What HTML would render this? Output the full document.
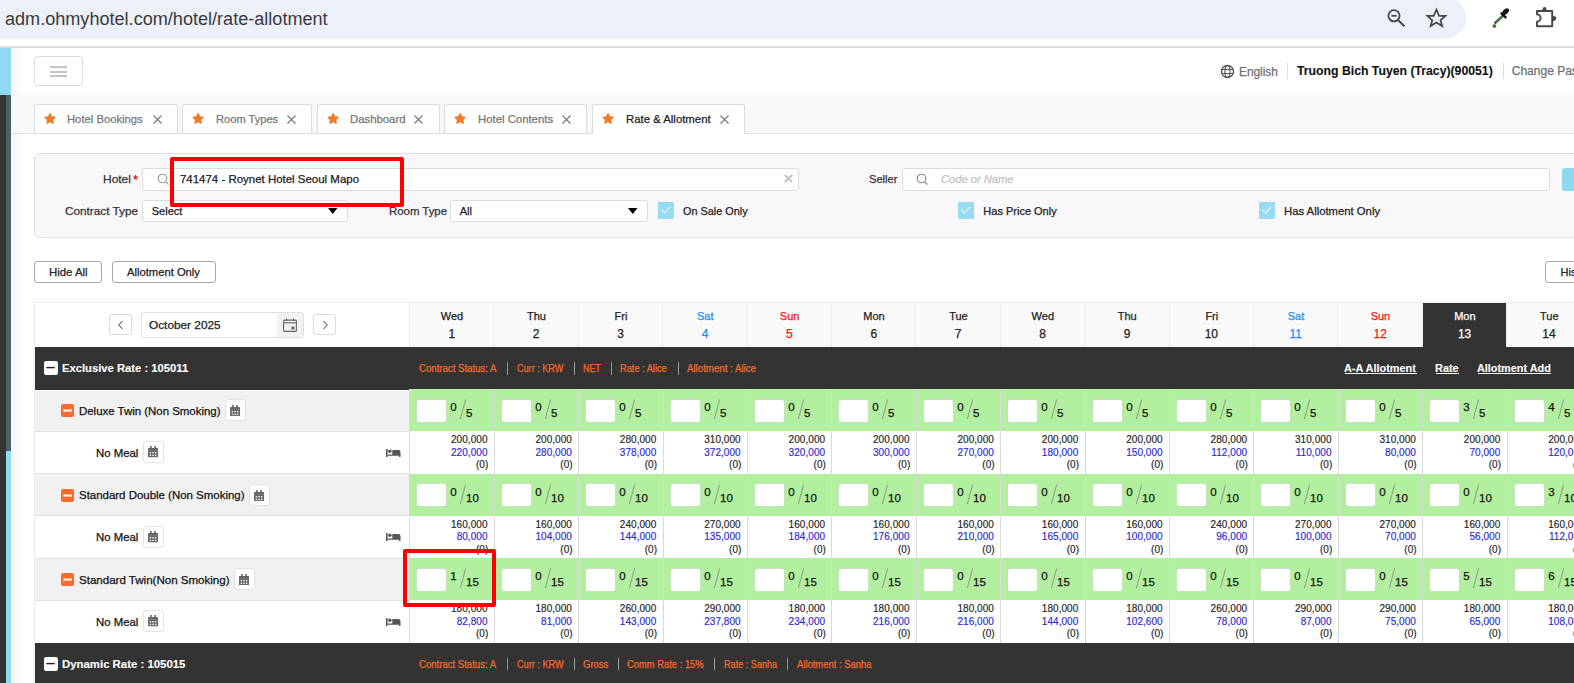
<!DOCTYPE html><html><head><meta charset="utf-8"><style>
*{box-sizing:border-box;margin:0;padding:0}
html,body{width:1574px;height:683px;overflow:hidden;background:#fff;font-family:"Liberation Sans",sans-serif;color:#222}
.a{position:absolute}
.a svg{display:block}
.t{position:absolute;white-space:nowrap;line-height:1;transform-origin:0 0;-webkit-text-stroke:0.25px currentColor}
</style></head><body>
<div class="a" style="left:-30px;top:-3px;width:1496px;height:41.6px;background:#ecf0f8;border-radius:21px"></div>
<div class="t" style="left:4.92px;top:10.00px;font-size:18px;color:#3a3a3a;font-weight:normal;font-style:normal;transform:scaleX(1.0045);-webkit-text-stroke:0">adm.ohmyhotel.com/hotel/rate-allotment</div>
<div class="a" style="left:0px;top:46px;width:1574px;height:2px;background:#dcdedc"></div>
<svg class="a" style="left:1380px;top:0" width="194" height="40" viewBox="1380 0 194 40">
<circle cx="1394" cy="15.8" r="5.6" fill="none" stroke="#474747" stroke-width="1.8"/>
<line x1="1391.4" y1="15.8" x2="1396.6" y2="15.8" stroke="#474747" stroke-width="1.8"/>
<line x1="1398" y1="20" x2="1404.4" y2="26.2" stroke="#474747" stroke-width="1.9"/>
<polygon points="1436.4,9.6 1439.1,15.9 1445.4,15.9 1440.5,20.3 1442.2,26.1 1436.4,22.6 1430.6,26.1 1432.3,20.3 1427.4,15.9 1433.7,15.9" fill="none" stroke="#474747" stroke-width="1.7" stroke-linejoin="miter"/>
<line x1="1495.4" y1="22.6" x2="1503.6" y2="15.3" stroke="#444" stroke-width="2.6" stroke-linecap="round"/>
<line x1="1495.8" y1="22.2" x2="1503" y2="15.8" stroke="#3aa04a" stroke-width="1.1"/>
<line x1="1501.4" y1="13.3" x2="1505.6" y2="17.4" stroke="#111" stroke-width="2.3" stroke-linecap="round"/>
<ellipse cx="1505.7" cy="11.6" rx="3.9" ry="2.5" transform="rotate(-45 1505.7 11.6)" fill="#151515"/>
<circle cx="1494.4" cy="26" r="1.5" fill="#2e8a3c" stroke="#333" stroke-width="0.6"/>
<path d="M1537,11 H1552.2 V26.2 H1537 V21.6 A3.6,3.6 0 0 0 1537,14.4 Z" fill="none" stroke="#474747" stroke-width="1.9" stroke-linejoin="round"/>
<path d="M1542.1,11 Q1542.6,7 1544.5,7 Q1546.4,7 1546.9,11 Z" fill="#474747"/>
<path d="M1552.2,15.6 Q1556.2,16.2 1556.2,18.5 Q1556.2,20.8 1552.2,21.4 Z" fill="#474747"/>
</svg>
<div class="a" style="left:0px;top:48px;width:11px;height:47px;background:#8fd9f1"></div>
<div class="a" style="left:0px;top:95px;width:6px;height:588px;background:#333"></div>
<div class="a" style="left:6px;top:95px;width:5px;height:356px;background:#4b5f66"></div>
<div class="a" style="left:6px;top:451px;width:5px;height:232px;background:#8fd9f1"></div>
<div class="a" style="left:11px;top:48px;width:1px;height:635px;background:#fff"></div>
<div class="a" style="left:12px;top:48px;width:12px;height:635px;background:linear-gradient(to right,#f4f3f7,#fff)"></div>
<div class="a" style="left:34px;top:56px;width:49px;height:30px;border:1px solid #dcdcdc;border-radius:4px;background:#fff"></div>
<div class="a" style="left:50px;top:66px;width:17px;height:2px;background:#c4c4c4"></div>
<div class="a" style="left:50px;top:70.5px;width:17px;height:2px;background:#c4c4c4"></div>
<div class="a" style="left:50px;top:75px;width:17px;height:2px;background:#c4c4c4"></div>
<div class="a" style="left:1220px;top:64px;width:15px;height:15px"><svg width="15" height="15" viewBox="0 0 15 15"><circle cx="7.5" cy="7.5" r="6" fill="none" stroke="#555" stroke-width="1.3"/><ellipse cx="7.5" cy="7.5" rx="2.6" ry="6" fill="none" stroke="#555" stroke-width="1.1"/><line x1="1.5" y1="5.5" x2="13.5" y2="5.5" stroke="#555" stroke-width="1"/><line x1="1.5" y1="9.5" x2="13.5" y2="9.5" stroke="#555" stroke-width="1"/></svg></div>
<div class="t" style="left:1238.89px;top:66.00px;font-size:12px;color:#707070;font-weight:normal;font-style:normal;transform:scaleX(0.9852);">English</div>
<div class="a" style="left:1287px;top:63px;width:1px;height:16px;background:#ddd"></div>
<div class="t" style="left:1297.27px;top:65.00px;font-size:12px;color:#111;font-weight:bold;font-style:normal;-webkit-text-stroke:0.1px currentColor;transform:scaleX(1.0204);">Truong Bich Tuyen (Tracy)(90051)</div>
<div class="a" style="left:1503px;top:63px;width:1px;height:16px;background:#ddd"></div>
<div class="t" style="left:1511.78px;top:65.00px;font-size:12px;color:#707070;font-weight:normal;font-style:normal;">Change Password</div>
<div class="a" style="left:11px;top:95px;width:1563px;height:38px;background:#f8f7fa"></div>
<div class="a" style="left:11px;top:133px;width:1563px;height:1px;background:#dedede"></div>
<div class="a" style="left:34px;top:104px;width:144px;height:29px;background:#fff;border:1px solid #dcdcdc;border-bottom:none;border-radius:3px 3px 0 0"></div>
<div class="a" style="left:43.7px;top:113.4px;width:12.2px;height:10.9px"><svg width="12.2" height="10.9" viewBox="0 0 576 512"><path d="M259.3 17.8L194 150.2 47.9 171.5c-26.2 3.8-36.7 36.1-17.7 54.6l105.7 103-25 145.5c-4.5 26.3 23.2 46 46.4 33.7L288 439.6l130.7 68.7c23.2 12.2 50.9-7.4 46.4-33.7l-25-145.5 105.7-103c19-18.5 8.5-50.8-17.7-54.6L382 150.2 316.7 17.8c-11.7-23.6-45.6-23.9-57.4 0z" fill="#f07b28"/></svg></div>
<div class="t" style="left:67.43px;top:114.00px;font-size:11px;color:#777;font-weight:normal;font-style:normal;transform:scaleX(1.0227);">Hotel Bookings</div>
<div class="a" style="left:152.5px;top:114.5px;width:9px;height:9px"><svg width="9" height="9" viewBox="0 0 9 9"><path d="M0.5 0.5L8.5 8.5M8.5 0.5L0.5 8.5" stroke="#777" stroke-width="1.1"/></svg></div>
<div class="a" style="left:182px;top:104px;width:130px;height:29px;background:#fff;border:1px solid #dcdcdc;border-bottom:none;border-radius:3px 3px 0 0"></div>
<div class="a" style="left:191.7px;top:113.4px;width:12.2px;height:10.9px"><svg width="12.2" height="10.9" viewBox="0 0 576 512"><path d="M259.3 17.8L194 150.2 47.9 171.5c-26.2 3.8-36.7 36.1-17.7 54.6l105.7 103-25 145.5c-4.5 26.3 23.2 46 46.4 33.7L288 439.6l130.7 68.7c23.2 12.2 50.9-7.4 46.4-33.7l-25-145.5 105.7-103c19-18.5 8.5-50.8-17.7-54.6L382 150.2 316.7 17.8c-11.7-23.6-45.6-23.9-57.4 0z" fill="#f07b28"/></svg></div>
<div class="t" style="left:215.53px;top:114.00px;font-size:11px;color:#777;font-weight:normal;font-style:normal;transform:scaleX(1.0100);">Room Types</div>
<div class="a" style="left:287.1px;top:114.5px;width:9px;height:9px"><svg width="9" height="9" viewBox="0 0 9 9"><path d="M0.5 0.5L8.5 8.5M8.5 0.5L0.5 8.5" stroke="#777" stroke-width="1.1"/></svg></div>
<div class="a" style="left:317px;top:104px;width:123px;height:29px;background:#fff;border:1px solid #dcdcdc;border-bottom:none;border-radius:3px 3px 0 0"></div>
<div class="a" style="left:326.7px;top:113.4px;width:12.2px;height:10.9px"><svg width="12.2" height="10.9" viewBox="0 0 576 512"><path d="M259.3 17.8L194 150.2 47.9 171.5c-26.2 3.8-36.7 36.1-17.7 54.6l105.7 103-25 145.5c-4.5 26.3 23.2 46 46.4 33.7L288 439.6l130.7 68.7c23.2 12.2 50.9-7.4 46.4-33.7l-25-145.5 105.7-103c19-18.5 8.5-50.8-17.7-54.6L382 150.2 316.7 17.8c-11.7-23.6-45.6-23.9-57.4 0z" fill="#f07b28"/></svg></div>
<div class="t" style="left:350.12px;top:114.00px;font-size:11px;color:#777;font-weight:normal;font-style:normal;transform:scaleX(1.0314);">Dashboard</div>
<div class="a" style="left:414.3px;top:114.5px;width:9px;height:9px"><svg width="9" height="9" viewBox="0 0 9 9"><path d="M0.5 0.5L8.5 8.5M8.5 0.5L0.5 8.5" stroke="#777" stroke-width="1.1"/></svg></div>
<div class="a" style="left:444px;top:104px;width:143px;height:29px;background:#fff;border:1px solid #dcdcdc;border-bottom:none;border-radius:3px 3px 0 0"></div>
<div class="a" style="left:453.7px;top:113.4px;width:12.2px;height:10.9px"><svg width="12.2" height="10.9" viewBox="0 0 576 512"><path d="M259.3 17.8L194 150.2 47.9 171.5c-26.2 3.8-36.7 36.1-17.7 54.6l105.7 103-25 145.5c-4.5 26.3 23.2 46 46.4 33.7L288 439.6l130.7 68.7c23.2 12.2 50.9-7.4 46.4-33.7l-25-145.5 105.7-103c19-18.5 8.5-50.8-17.7-54.6L382 150.2 316.7 17.8c-11.7-23.6-45.6-23.9-57.4 0z" fill="#f07b28"/></svg></div>
<div class="t" style="left:477.72px;top:114.00px;font-size:11px;color:#777;font-weight:normal;font-style:normal;transform:scaleX(1.0316);">Hotel Contents</div>
<div class="a" style="left:562.0px;top:114.5px;width:9px;height:9px"><svg width="9" height="9" viewBox="0 0 9 9"><path d="M0.5 0.5L8.5 8.5M8.5 0.5L0.5 8.5" stroke="#777" stroke-width="1.1"/></svg></div>
<div class="a" style="left:592px;top:104px;width:153px;height:30px;background:#fff;border:1px solid #dcdcdc;border-bottom:none;border-radius:3px 3px 0 0"></div>
<div class="a" style="left:601.7px;top:113.4px;width:12.2px;height:10.9px"><svg width="12.2" height="10.9" viewBox="0 0 576 512"><path d="M259.3 17.8L194 150.2 47.9 171.5c-26.2 3.8-36.7 36.1-17.7 54.6l105.7 103-25 145.5c-4.5 26.3 23.2 46 46.4 33.7L288 439.6l130.7 68.7c23.2 12.2 50.9-7.4 46.4-33.7l-25-145.5 105.7-103c19-18.5 8.5-50.8-17.7-54.6L382 150.2 316.7 17.8c-11.7-23.6-45.6-23.9-57.4 0z" fill="#f07b28"/></svg></div>
<div class="t" style="left:625.52px;top:114.00px;font-size:11px;color:#222;font-weight:normal;font-style:normal;transform:scaleX(1.0327);">Rate &amp; Allotment</div>
<div class="a" style="left:719.9px;top:114.5px;width:9px;height:9px"><svg width="9" height="9" viewBox="0 0 9 9"><path d="M0.5 0.5L8.5 8.5M8.5 0.5L0.5 8.5" stroke="#777" stroke-width="1.1"/></svg></div>
<div class="a" style="left:34px;top:153px;width:1560px;height:85px;background:#f9f7fa;border:1px solid #dfdfdf;border-radius:6px"></div>
<div class="t" style="left:102.98px;top:174.00px;font-size:11px;color:#333;font-weight:normal;font-style:normal;transform:scaleX(1.0865);">Hotel</div>
<div class="t" style="left:133.28px;top:174.00px;font-size:12px;color:#e00;font-weight:normal;font-style:normal;">*</div>
<div class="a" style="left:142px;top:168px;width:657px;height:23px;background:#fff;border:1px solid #dcdcdc;border-radius:3px"></div>
<div class="a" style="left:157px;top:173px;width:13px;height:13px"><svg width="13" height="13" viewBox="0 0 13 13"><circle cx="5.5" cy="5.5" r="4.3" fill="none" stroke="#999" stroke-width="1.1"/><line x1="8.6" y1="8.6" x2="11.5" y2="11.5" stroke="#999" stroke-width="1.1"/></svg></div>
<div class="t" style="left:180.11px;top:174.00px;font-size:10.5px;color:#222;font-weight:normal;font-style:normal;transform:scaleX(1.0914);">741474 - Roynet Hotel Seoul Mapo</div>
<div class="a" style="left:784px;top:174.2px;width:9px;height:9px"><svg width="9" height="9" viewBox="0 0 9 9"><path d="M0.8 0.8L8.2 8.2M8.2 0.8L0.8 8.2" stroke="#bdbdbd" stroke-width="1.8"/></svg></div>
<div class="t" style="left:869.34px;top:174.00px;font-size:11px;color:#333;font-weight:normal;font-style:normal;transform:scaleX(1.0072);">Seller</div>
<div class="a" style="left:902px;top:168px;width:648px;height:23px;background:#fff;border:1px solid #dcdcdc;border-radius:3px"></div>
<div class="a" style="left:916px;top:173px;width:13px;height:13px"><svg width="13" height="13" viewBox="0 0 13 13"><circle cx="5.5" cy="5.5" r="4.3" fill="none" stroke="#888" stroke-width="1.1"/><line x1="8.6" y1="8.6" x2="11.5" y2="11.5" stroke="#888" stroke-width="1.1"/></svg></div>
<div class="t" style="left:940.63px;top:174.00px;font-size:10.5px;color:#c2c2c2;font-weight:normal;font-style:italic;transform:scaleX(1.0618);">Code or Name</div>
<div class="a" style="left:1562px;top:168px;width:40px;height:23px;background:#8ed8f0;border-radius:3px"></div>
<div class="t" style="left:65.49px;top:206.00px;font-size:11px;color:#333;font-weight:normal;font-style:normal;transform:scaleX(1.0694);">Contract Type</div>
<div class="a" style="left:142px;top:200px;width:206px;height:22px;background:#fff;border:1px solid #dcdcdc;border-radius:3px"></div>
<div class="t" style="left:151.74px;top:206.00px;font-size:11px;color:#222;font-weight:normal;font-style:normal;">Select</div>
<div class="a" style="left:328px;top:208px;width:9.5px;height:6px"><svg width="9.5" height="6" viewBox="0 0 9.5 6"><path d="M0 0H9.5L4.75 6Z" fill="#000"/></svg></div>
<div class="t" style="left:388.92px;top:206.00px;font-size:11px;color:#333;font-weight:normal;font-style:normal;transform:scaleX(1.0348);">Room Type</div>
<div class="a" style="left:450px;top:200px;width:198px;height:22px;background:#fff;border:1px solid #dcdcdc;border-radius:3px"></div>
<div class="t" style="left:459.74px;top:206.00px;font-size:11px;color:#222;font-weight:normal;font-style:normal;">All</div>
<div class="a" style="left:628px;top:208px;width:9.5px;height:6px"><svg width="9.5" height="6" viewBox="0 0 9.5 6"><path d="M0 0H9.5L4.75 6Z" fill="#000"/></svg></div>
<div class="a" style="left:658px;top:202.3px;width:16px;height:17px"><svg width="16" height="17" viewBox="0 0 16 17"><rect width="16" height="17" fill="#97dbf1"/><path d="M3.2 7.3L6.6 10.9L12 4.8" fill="none" stroke="#e8f8fd" stroke-width="1.1"/></svg></div>
<div class="t" style="left:683.35px;top:206.00px;font-size:11px;color:#222;font-weight:normal;font-style:normal;transform:scaleX(0.9868);">On Sale Only</div>
<div class="a" style="left:958px;top:202.3px;width:16px;height:17px"><svg width="16" height="17" viewBox="0 0 16 17"><rect width="16" height="17" fill="#97dbf1"/><path d="M3.2 7.3L6.6 10.9L12 4.8" fill="none" stroke="#e8f8fd" stroke-width="1.1"/></svg></div>
<div class="t" style="left:983.34px;top:206.00px;font-size:11px;color:#222;font-weight:normal;font-style:normal;">Has Price Only</div>
<div class="a" style="left:1259px;top:202.3px;width:16px;height:17px"><svg width="16" height="17" viewBox="0 0 16 17"><rect width="16" height="17" fill="#97dbf1"/><path d="M3.2 7.3L6.6 10.9L12 4.8" fill="none" stroke="#e8f8fd" stroke-width="1.1"/></svg></div>
<div class="t" style="left:1284.32px;top:206.00px;font-size:11px;color:#222;font-weight:normal;font-style:normal;transform:scaleX(1.0268);">Has Allotment Only</div>
<div class="a" style="left:170px;top:157px;width:234px;height:50px;border:4px solid #f00;border-radius:2px"></div>
<div class="a" style="left:34px;top:261px;width:68px;height:22px;background:#fff;border:1px solid #a8a8a8;border-radius:3px"></div>
<div class="t" style="left:48.62px;top:267.00px;font-size:11px;color:#222;font-weight:normal;font-style:normal;transform:scaleX(1.0326);">Hide All</div>
<div class="a" style="left:112px;top:261px;width:104px;height:22px;background:#fff;border:1px solid #a8a8a8;border-radius:3px"></div>
<div class="t" style="left:126.53px;top:267.00px;font-size:11px;color:#222;font-weight:normal;font-style:normal;transform:scaleX(1.0201);">Allotment Only</div>
<div class="a" style="left:1545px;top:261px;width:60px;height:22px;background:#fff;border:1px solid #a8a8a8;border-radius:3px"></div>
<div class="t" style="left:1560.54px;top:267.00px;font-size:11px;color:#222;font-weight:normal;font-style:normal;">History</div>
<div class="a" style="left:34px;top:302px;width:1540px;height:1px;background:#ececec"></div>
<div class="a" style="left:34px;top:302px;width:1px;height:381px;background:#ececec"></div>
<div class="a" style="left:35px;top:303px;width:374px;height:44px;background:#fff"></div>
<div class="a" style="left:109px;top:314px;width:23px;height:21px;border:1px solid #dcdcdc;border-radius:3px;background:#fff"></div>
<div class="a" style="left:117px;top:320px;width:8px;height:10px"><svg width="8" height="10" viewBox="0 0 8 10"><path d="M5.5 1L1.8 5L5.5 9" fill="none" stroke="#666" stroke-width="1.1"/></svg></div>
<div class="a" style="left:141px;top:312px;width:163px;height:26px;border:1px solid #e0e0e0;border-radius:3px;background:#fff"></div>
<div class="a" style="left:277px;top:313px;width:26px;height:24px;background:#f2f2f2"></div>
<div class="a" style="left:283px;top:318px;width:14px;height:14px"><svg width="14" height="14" viewBox="0 0 14 14"><rect x="0.6" y="2.1" width="12.8" height="11.3" rx="1" fill="none" stroke="#666" stroke-width="1.1"/><line x1="0.6" y1="4.8" x2="13.4" y2="4.8" stroke="#666" stroke-width="1.1"/><line x1="3.5" y1="0.5" x2="3.5" y2="3" stroke="#666" stroke-width="1.1"/><line x1="10.5" y1="0.5" x2="10.5" y2="3" stroke="#666" stroke-width="1.1"/><rect x="8.5" y="8.5" width="3" height="3" fill="#666"/></svg></div>
<div class="t" style="left:149.09px;top:320.00px;font-size:11px;color:#222;font-weight:normal;font-style:normal;transform:scaleX(1.0747);">October 2025</div>
<div class="a" style="left:313px;top:314px;width:23px;height:21px;border:1px solid #dcdcdc;border-radius:3px;background:#fff"></div>
<div class="a" style="left:321px;top:320px;width:8px;height:10px"><svg width="8" height="10" viewBox="0 0 8 10"><path d="M2.5 1L6.2 5L2.5 9" fill="none" stroke="#666" stroke-width="1.1"/></svg></div>
<div class="a" style="left:409px;top:303px;width:84px;height:44px;background:#f9f9f9;border-left:1px solid #ececec"></div>
<div class="t" style="left:440.82px;top:311.00px;font-size:11px;color:#222;font-weight:normal;font-style:normal;">Wed</div>
<div class="t" style="left:448.44px;top:328.00px;font-size:12px;color:#222;font-weight:normal;font-style:normal;">1</div>
<div class="a" style="left:493px;top:303px;width:85px;height:44px;background:#f9f9f9;border-left:1px solid #ececec"></div>
<div class="t" style="left:526.95px;top:311.00px;font-size:11px;color:#222;font-weight:normal;font-style:normal;">Thu</div>
<div class="t" style="left:532.84px;top:328.00px;font-size:12px;color:#222;font-weight:normal;font-style:normal;">2</div>
<div class="a" style="left:578px;top:303px;width:84px;height:44px;background:#f9f9f9;border-left:1px solid #ececec"></div>
<div class="t" style="left:614.58px;top:311.00px;font-size:11px;color:#222;font-weight:normal;font-style:normal;">Fri</div>
<div class="t" style="left:617.24px;top:328.00px;font-size:12px;color:#222;font-weight:normal;font-style:normal;">3</div>
<div class="a" style="left:662px;top:303px;width:85px;height:44px;background:#f9f9f9;border-left:1px solid #ececec"></div>
<div class="t" style="left:696.94px;top:311.00px;font-size:11px;color:#1f8cf5;font-weight:normal;font-style:normal;">Sat</div>
<div class="t" style="left:701.64px;top:328.00px;font-size:12px;color:#1f8cf5;font-weight:normal;font-style:normal;">4</div>
<div class="a" style="left:747px;top:303px;width:84px;height:44px;background:#f9f9f9;border-left:1px solid #ececec"></div>
<div class="t" style="left:779.84px;top:311.00px;font-size:11px;color:#ff1414;font-weight:normal;font-style:normal;">Sun</div>
<div class="t" style="left:786.04px;top:328.00px;font-size:12px;color:#ff1414;font-weight:normal;font-style:normal;">5</div>
<div class="a" style="left:831px;top:303px;width:84px;height:44px;background:#f9f9f9;border-left:1px solid #ececec"></div>
<div class="t" style="left:863.33px;top:311.00px;font-size:11px;color:#222;font-weight:normal;font-style:normal;">Mon</div>
<div class="t" style="left:870.44px;top:328.00px;font-size:12px;color:#222;font-weight:normal;font-style:normal;">6</div>
<div class="a" style="left:915px;top:303px;width:85px;height:44px;background:#f9f9f9;border-left:1px solid #ececec"></div>
<div class="t" style="left:949.16px;top:311.00px;font-size:11px;color:#222;font-weight:normal;font-style:normal;">Tue</div>
<div class="t" style="left:954.84px;top:328.00px;font-size:12px;color:#222;font-weight:normal;font-style:normal;">7</div>
<div class="a" style="left:1000px;top:303px;width:84px;height:44px;background:#f9f9f9;border-left:1px solid #ececec"></div>
<div class="t" style="left:1031.62px;top:311.00px;font-size:11px;color:#222;font-weight:normal;font-style:normal;">Wed</div>
<div class="t" style="left:1039.24px;top:328.00px;font-size:12px;color:#222;font-weight:normal;font-style:normal;">8</div>
<div class="a" style="left:1084px;top:303px;width:85px;height:44px;background:#f9f9f9;border-left:1px solid #ececec"></div>
<div class="t" style="left:1117.75px;top:311.00px;font-size:11px;color:#222;font-weight:normal;font-style:normal;">Thu</div>
<div class="t" style="left:1123.64px;top:328.00px;font-size:12px;color:#222;font-weight:normal;font-style:normal;">9</div>
<div class="a" style="left:1169px;top:303px;width:84px;height:44px;background:#f9f9f9;border-left:1px solid #ececec"></div>
<div class="t" style="left:1205.38px;top:311.00px;font-size:11px;color:#222;font-weight:normal;font-style:normal;">Fri</div>
<div class="t" style="left:1204.70px;top:328.00px;font-size:12px;color:#222;font-weight:normal;font-style:normal;">10</div>
<div class="a" style="left:1253px;top:303px;width:84px;height:44px;background:#f9f9f9;border-left:1px solid #ececec"></div>
<div class="t" style="left:1287.74px;top:311.00px;font-size:11px;color:#1f8cf5;font-weight:normal;font-style:normal;">Sat</div>
<div class="t" style="left:1289.55px;top:328.00px;font-size:12px;color:#1f8cf5;font-weight:normal;font-style:normal;">11</div>
<div class="a" style="left:1337px;top:303px;width:85px;height:44px;background:#f9f9f9;border-left:1px solid #ececec"></div>
<div class="t" style="left:1370.64px;top:311.00px;font-size:11px;color:#ff1414;font-weight:normal;font-style:normal;">Sun</div>
<div class="t" style="left:1373.50px;top:328.00px;font-size:12px;color:#ff1414;font-weight:normal;font-style:normal;">12</div>
<div class="a" style="left:1422px;top:303px;width:84px;height:44px;background:#333;border-left:1px solid #ececec"></div>
<div class="a" style="left:1423px;top:303px;width:84px;height:44px;background:#333"></div>
<div class="t" style="left:1454.13px;top:311.00px;font-size:11px;color:#fff;font-weight:normal;font-style:normal;">Mon</div>
<div class="t" style="left:1457.90px;top:328.00px;font-size:12px;color:#fff;font-weight:normal;font-style:normal;">13</div>
<div class="a" style="left:1506px;top:303px;width:85px;height:44px;background:#f9f9f9;border-left:1px solid #ececec"></div>
<div class="t" style="left:1539.96px;top:311.00px;font-size:11px;color:#222;font-weight:normal;font-style:normal;">Tue</div>
<div class="t" style="left:1542.30px;top:328.00px;font-size:12px;color:#222;font-weight:normal;font-style:normal;">14</div>
<div class="a" style="left:1591px;top:303px;width:84px;height:44px;background:#f9f9f9;border-left:1px solid #ececec"></div>
<div class="t" style="left:1622.42px;top:311.00px;font-size:11px;color:#222;font-weight:normal;font-style:normal;">Wed</div>
<div class="t" style="left:1626.70px;top:328.00px;font-size:12px;color:#222;font-weight:normal;font-style:normal;">15</div>
<div class="a" style="left:35px;top:347px;width:1539px;height:42.5px;background:#333"></div>
<div class="a" style="left:44px;top:361px;width:14px;height:14px"><svg width="14" height="14" viewBox="0 0 14 14"><rect width="14" height="14" rx="2" fill="#fff"/><rect x="2.4" y="5.9" width="8.4" height="1.4" fill="#222"/></svg></div>
<div class="t" style="left:61.93px;top:363.00px;font-size:11px;color:#fff;font-weight:bold;font-style:normal;-webkit-text-stroke:0.1px currentColor;transform:scaleX(1.0216);">Exclusive Rate : 105011</div>
<div class="t" style="left:419.02px;top:364.00px;font-size:10px;color:#f26b2b;font-weight:normal;font-style:normal;transform:scaleX(0.9619);">Contract Status: A</div>
<div class="t" style="left:516.96px;top:364.00px;font-size:10px;color:#f26b2b;font-weight:normal;font-style:normal;transform:scaleX(0.9079);">Curr : KRW</div>
<div class="t" style="left:582.87px;top:364.00px;font-size:10px;color:#f26b2b;font-weight:normal;font-style:normal;transform:scaleX(0.8864);">NET</div>
<div class="t" style="left:620.35px;top:364.00px;font-size:10px;color:#f26b2b;font-weight:normal;font-style:normal;transform:scaleX(0.9240);">Rate : Alice</div>
<div class="t" style="left:687.32px;top:364.00px;font-size:10px;color:#f26b2b;font-weight:normal;font-style:normal;transform:scaleX(0.9688);">Allotment : Alice</div>
<div class="a" style="left:507px;top:362px;width:1px;height:12.5px;background:#9a9a9a"></div>
<div class="a" style="left:574px;top:362px;width:1px;height:12.5px;background:#9a9a9a"></div>
<div class="a" style="left:611px;top:362px;width:1px;height:12.5px;background:#9a9a9a"></div>
<div class="a" style="left:678px;top:362px;width:1px;height:12.5px;background:#9a9a9a"></div>
<div class="t" style="left:1344.25px;top:363.00px;font-size:11px;color:#fff;font-weight:bold;font-style:normal;-webkit-text-stroke:0.1px currentColor;transform:scaleX(0.9904);">A-A Allotment</div>
<div class="a" style="left:1344.9px;top:373px;width:72.3px;height:1px;background:#fff"></div>
<div class="t" style="left:1435.34px;top:363.00px;font-size:11px;color:#fff;font-weight:bold;font-style:normal;-webkit-text-stroke:0.1px currentColor;transform:scaleX(0.9929);">Rate</div>
<div class="a" style="left:1436px;top:373px;width:22.9px;height:1px;background:#fff"></div>
<div class="t" style="left:1477.25px;top:363.00px;font-size:11px;color:#fff;font-weight:bold;font-style:normal;-webkit-text-stroke:0.1px currentColor;transform:scaleX(0.9867);">Allotment Add</div>
<div class="a" style="left:1477.9px;top:373px;width:72.8px;height:1px;background:#fff"></div>
<div class="a" style="left:35px;top:389px;width:374px;height:42.55px;background:#f1f1f1"></div>
<div class="a" style="left:61px;top:404px;width:13px;height:13px"><svg width="13" height="13" viewBox="0 0 13 13"><rect width="13" height="13" rx="2" fill="#ff6a2b"/><rect x="2.4" y="5.5" width="8.4" height="2.1" fill="#fff"/></svg></div>
<div class="t" style="left:78.61px;top:406.00px;font-size:11px;color:#111;font-weight:normal;font-style:normal;transform:scaleX(1.0392);">Deluxe Twin (Non Smoking)</div>
<div class="a" style="left:225px;top:399px;width:21px;height:22px;background:#fff;border:1px solid #e3e3e3;border-radius:3px"></div>
<div class="a" style="left:230.2px;top:404.5px;width:10px;height:11.5px"><svg width="10" height="11.5" viewBox="0 0 10 11.5"><rect x="2.1" y="0" width="1.6" height="3" fill="#666"/><rect x="6.3" y="0" width="1.6" height="3" fill="#666"/><rect x="0" y="2.1" width="10" height="9.2" rx="0.8" fill="#666"/><rect x="0" y="4.3" width="10" height="0.5" fill="#888"/><g fill="#fff"><rect x="1.7" y="6" width="1.4" height="1.4"/><rect x="4.3" y="6" width="1.4" height="1.4"/><rect x="6.9" y="6" width="1.4" height="1.4"/><rect x="1.7" y="8.7" width="1.4" height="1.4"/><rect x="4.3" y="8.7" width="1.4" height="1.4"/><rect x="6.9" y="8.7" width="1.4" height="1.4"/></g></svg></div>
<div class="a" style="left:409px;top:389px;width:85px;height:42.55px;background:#b2f09f;border-left:1px solid #dadada"></div>
<div class="a" style="left:416.5px;top:399.5px;width:29px;height:22px;background:#fff;border-radius:2.5px;box-shadow:0 0 0 0.5px #d9d4d9"></div>
<div class="t" style="left:450.21px;top:402.00px;font-size:11.5px;color:#111;font-weight:normal;font-style:normal;">0</div>
<div class="a" style="left:460px;top:399px;width:7px;height:21px"><svg width="7" height="21" viewBox="0 0 7 21"><line x1="5.6" y1="0.5" x2="0.4" y2="20" stroke="#8a8a8a" stroke-width="0.9"/></svg></div>
<div class="t" style="left:466.11px;top:408.00px;font-size:11.5px;color:#111;font-weight:normal;font-style:normal;">5</div>
<div class="a" style="left:494px;top:389px;width:84px;height:42.55px;background:#b2f09f;border-left:1px solid #dadada"></div>
<div class="a" style="left:501.5px;top:399.5px;width:29px;height:22px;background:#fff;border-radius:2.5px;box-shadow:0 0 0 0.5px #d9d4d9"></div>
<div class="t" style="left:535.21px;top:402.00px;font-size:11.5px;color:#111;font-weight:normal;font-style:normal;">0</div>
<div class="a" style="left:545px;top:399px;width:7px;height:21px"><svg width="7" height="21" viewBox="0 0 7 21"><line x1="5.6" y1="0.5" x2="0.4" y2="20" stroke="#8a8a8a" stroke-width="0.9"/></svg></div>
<div class="t" style="left:551.11px;top:408.00px;font-size:11.5px;color:#111;font-weight:normal;font-style:normal;">5</div>
<div class="a" style="left:578px;top:389px;width:85px;height:42.55px;background:#b2f09f;border-left:1px solid #dadada"></div>
<div class="a" style="left:585.5px;top:399.5px;width:29px;height:22px;background:#fff;border-radius:2.5px;box-shadow:0 0 0 0.5px #d9d4d9"></div>
<div class="t" style="left:619.21px;top:402.00px;font-size:11.5px;color:#111;font-weight:normal;font-style:normal;">0</div>
<div class="a" style="left:629px;top:399px;width:7px;height:21px"><svg width="7" height="21" viewBox="0 0 7 21"><line x1="5.6" y1="0.5" x2="0.4" y2="20" stroke="#8a8a8a" stroke-width="0.9"/></svg></div>
<div class="t" style="left:635.11px;top:408.00px;font-size:11.5px;color:#111;font-weight:normal;font-style:normal;">5</div>
<div class="a" style="left:663px;top:389px;width:84px;height:42.55px;background:#b2f09f;border-left:1px solid #dadada"></div>
<div class="a" style="left:670.5px;top:399.5px;width:29px;height:22px;background:#fff;border-radius:2.5px;box-shadow:0 0 0 0.5px #d9d4d9"></div>
<div class="t" style="left:704.21px;top:402.00px;font-size:11.5px;color:#111;font-weight:normal;font-style:normal;">0</div>
<div class="a" style="left:714px;top:399px;width:7px;height:21px"><svg width="7" height="21" viewBox="0 0 7 21"><line x1="5.6" y1="0.5" x2="0.4" y2="20" stroke="#8a8a8a" stroke-width="0.9"/></svg></div>
<div class="t" style="left:720.11px;top:408.00px;font-size:11.5px;color:#111;font-weight:normal;font-style:normal;">5</div>
<div class="a" style="left:747px;top:389px;width:84px;height:42.55px;background:#b2f09f;border-left:1px solid #dadada"></div>
<div class="a" style="left:754.5px;top:399.5px;width:29px;height:22px;background:#fff;border-radius:2.5px;box-shadow:0 0 0 0.5px #d9d4d9"></div>
<div class="t" style="left:788.21px;top:402.00px;font-size:11.5px;color:#111;font-weight:normal;font-style:normal;">0</div>
<div class="a" style="left:798px;top:399px;width:7px;height:21px"><svg width="7" height="21" viewBox="0 0 7 21"><line x1="5.6" y1="0.5" x2="0.4" y2="20" stroke="#8a8a8a" stroke-width="0.9"/></svg></div>
<div class="t" style="left:804.11px;top:408.00px;font-size:11.5px;color:#111;font-weight:normal;font-style:normal;">5</div>
<div class="a" style="left:831px;top:389px;width:85px;height:42.55px;background:#b2f09f;border-left:1px solid #dadada"></div>
<div class="a" style="left:838.5px;top:399.5px;width:29px;height:22px;background:#fff;border-radius:2.5px;box-shadow:0 0 0 0.5px #d9d4d9"></div>
<div class="t" style="left:872.21px;top:402.00px;font-size:11.5px;color:#111;font-weight:normal;font-style:normal;">0</div>
<div class="a" style="left:882px;top:399px;width:7px;height:21px"><svg width="7" height="21" viewBox="0 0 7 21"><line x1="5.6" y1="0.5" x2="0.4" y2="20" stroke="#8a8a8a" stroke-width="0.9"/></svg></div>
<div class="t" style="left:888.11px;top:408.00px;font-size:11.5px;color:#111;font-weight:normal;font-style:normal;">5</div>
<div class="a" style="left:916px;top:389px;width:84px;height:42.55px;background:#b2f09f;border-left:1px solid #dadada"></div>
<div class="a" style="left:923.5px;top:399.5px;width:29px;height:22px;background:#fff;border-radius:2.5px;box-shadow:0 0 0 0.5px #d9d4d9"></div>
<div class="t" style="left:957.21px;top:402.00px;font-size:11.5px;color:#111;font-weight:normal;font-style:normal;">0</div>
<div class="a" style="left:967px;top:399px;width:7px;height:21px"><svg width="7" height="21" viewBox="0 0 7 21"><line x1="5.6" y1="0.5" x2="0.4" y2="20" stroke="#8a8a8a" stroke-width="0.9"/></svg></div>
<div class="t" style="left:973.11px;top:408.00px;font-size:11.5px;color:#111;font-weight:normal;font-style:normal;">5</div>
<div class="a" style="left:1000px;top:389px;width:85px;height:42.55px;background:#b2f09f;border-left:1px solid #dadada"></div>
<div class="a" style="left:1007.5px;top:399.5px;width:29px;height:22px;background:#fff;border-radius:2.5px;box-shadow:0 0 0 0.5px #d9d4d9"></div>
<div class="t" style="left:1041.21px;top:402.00px;font-size:11.5px;color:#111;font-weight:normal;font-style:normal;">0</div>
<div class="a" style="left:1051px;top:399px;width:7px;height:21px"><svg width="7" height="21" viewBox="0 0 7 21"><line x1="5.6" y1="0.5" x2="0.4" y2="20" stroke="#8a8a8a" stroke-width="0.9"/></svg></div>
<div class="t" style="left:1057.11px;top:408.00px;font-size:11.5px;color:#111;font-weight:normal;font-style:normal;">5</div>
<div class="a" style="left:1085px;top:389px;width:84px;height:42.55px;background:#b2f09f;border-left:1px solid #dadada"></div>
<div class="a" style="left:1092.5px;top:399.5px;width:29px;height:22px;background:#fff;border-radius:2.5px;box-shadow:0 0 0 0.5px #d9d4d9"></div>
<div class="t" style="left:1126.21px;top:402.00px;font-size:11.5px;color:#111;font-weight:normal;font-style:normal;">0</div>
<div class="a" style="left:1136px;top:399px;width:7px;height:21px"><svg width="7" height="21" viewBox="0 0 7 21"><line x1="5.6" y1="0.5" x2="0.4" y2="20" stroke="#8a8a8a" stroke-width="0.9"/></svg></div>
<div class="t" style="left:1142.11px;top:408.00px;font-size:11.5px;color:#111;font-weight:normal;font-style:normal;">5</div>
<div class="a" style="left:1169px;top:389px;width:84px;height:42.55px;background:#b2f09f;border-left:1px solid #dadada"></div>
<div class="a" style="left:1176.5px;top:399.5px;width:29px;height:22px;background:#fff;border-radius:2.5px;box-shadow:0 0 0 0.5px #d9d4d9"></div>
<div class="t" style="left:1210.21px;top:402.00px;font-size:11.5px;color:#111;font-weight:normal;font-style:normal;">0</div>
<div class="a" style="left:1220px;top:399px;width:7px;height:21px"><svg width="7" height="21" viewBox="0 0 7 21"><line x1="5.6" y1="0.5" x2="0.4" y2="20" stroke="#8a8a8a" stroke-width="0.9"/></svg></div>
<div class="t" style="left:1226.11px;top:408.00px;font-size:11.5px;color:#111;font-weight:normal;font-style:normal;">5</div>
<div class="a" style="left:1253px;top:389px;width:85px;height:42.55px;background:#b2f09f;border-left:1px solid #dadada"></div>
<div class="a" style="left:1260.5px;top:399.5px;width:29px;height:22px;background:#fff;border-radius:2.5px;box-shadow:0 0 0 0.5px #d9d4d9"></div>
<div class="t" style="left:1294.21px;top:402.00px;font-size:11.5px;color:#111;font-weight:normal;font-style:normal;">0</div>
<div class="a" style="left:1304px;top:399px;width:7px;height:21px"><svg width="7" height="21" viewBox="0 0 7 21"><line x1="5.6" y1="0.5" x2="0.4" y2="20" stroke="#8a8a8a" stroke-width="0.9"/></svg></div>
<div class="t" style="left:1310.11px;top:408.00px;font-size:11.5px;color:#111;font-weight:normal;font-style:normal;">5</div>
<div class="a" style="left:1338px;top:389px;width:84px;height:42.55px;background:#b2f09f;border-left:1px solid #dadada"></div>
<div class="a" style="left:1345.5px;top:399.5px;width:29px;height:22px;background:#fff;border-radius:2.5px;box-shadow:0 0 0 0.5px #d9d4d9"></div>
<div class="t" style="left:1379.21px;top:402.00px;font-size:11.5px;color:#111;font-weight:normal;font-style:normal;">0</div>
<div class="a" style="left:1389px;top:399px;width:7px;height:21px"><svg width="7" height="21" viewBox="0 0 7 21"><line x1="5.6" y1="0.5" x2="0.4" y2="20" stroke="#8a8a8a" stroke-width="0.9"/></svg></div>
<div class="t" style="left:1395.11px;top:408.00px;font-size:11.5px;color:#111;font-weight:normal;font-style:normal;">5</div>
<div class="a" style="left:1422px;top:389px;width:85px;height:42.55px;background:#b2f09f;border-left:1px solid #dadada"></div>
<div class="a" style="left:1429.5px;top:399.5px;width:29px;height:22px;background:#fff;border-radius:2.5px;box-shadow:0 0 0 0.5px #d9d4d9"></div>
<div class="t" style="left:1463.21px;top:402.00px;font-size:11.5px;color:#111;font-weight:normal;font-style:normal;">3</div>
<div class="a" style="left:1473px;top:399px;width:7px;height:21px"><svg width="7" height="21" viewBox="0 0 7 21"><line x1="5.6" y1="0.5" x2="0.4" y2="20" stroke="#8a8a8a" stroke-width="0.9"/></svg></div>
<div class="t" style="left:1479.11px;top:408.00px;font-size:11.5px;color:#111;font-weight:normal;font-style:normal;">5</div>
<div class="a" style="left:1507px;top:389px;width:84px;height:42.55px;background:#b2f09f;border-left:1px solid #dadada"></div>
<div class="a" style="left:1514.5px;top:399.5px;width:29px;height:22px;background:#fff;border-radius:2.5px;box-shadow:0 0 0 0.5px #d9d4d9"></div>
<div class="t" style="left:1548.21px;top:402.00px;font-size:11.5px;color:#111;font-weight:normal;font-style:normal;">4</div>
<div class="a" style="left:1558px;top:399px;width:7px;height:21px"><svg width="7" height="21" viewBox="0 0 7 21"><line x1="5.6" y1="0.5" x2="0.4" y2="20" stroke="#8a8a8a" stroke-width="0.9"/></svg></div>
<div class="t" style="left:1564.11px;top:408.00px;font-size:11.5px;color:#111;font-weight:normal;font-style:normal;">5</div>
<div class="a" style="left:1591px;top:389px;width:84px;height:42.55px;background:#b2f09f;border-left:1px solid #dadada"></div>
<div class="a" style="left:1598.5px;top:399.5px;width:29px;height:22px;background:#fff;border-radius:2.5px;box-shadow:0 0 0 0.5px #d9d4d9"></div>
<div class="t" style="left:1632.21px;top:402.00px;font-size:11.5px;color:#111;font-weight:normal;font-style:normal;">0</div>
<div class="a" style="left:1642px;top:399px;width:7px;height:21px"><svg width="7" height="21" viewBox="0 0 7 21"><line x1="5.6" y1="0.5" x2="0.4" y2="20" stroke="#8a8a8a" stroke-width="0.9"/></svg></div>
<div class="t" style="left:1648.11px;top:408.00px;font-size:11.5px;color:#111;font-weight:normal;font-style:normal;">5</div>
<div class="a" style="left:35px;top:431.25px;width:374px;height:42.55px;background:#fff"></div>
<div class="t" style="left:95.62px;top:448.00px;font-size:11px;color:#111;font-weight:normal;font-style:normal;transform:scaleX(1.0337);">No Meal</div>
<div class="a" style="left:143px;top:441px;width:21px;height:22px;background:#fff;border:1px solid #e3e3e3;border-radius:3px"></div>
<div class="a" style="left:148.2px;top:446.4px;width:10px;height:11.5px"><svg width="10" height="11.5" viewBox="0 0 10 11.5"><rect x="2.1" y="0" width="1.6" height="3" fill="#666"/><rect x="6.3" y="0" width="1.6" height="3" fill="#666"/><rect x="0" y="2.1" width="10" height="9.2" rx="0.8" fill="#666"/><rect x="0" y="4.3" width="10" height="0.5" fill="#888"/><g fill="#fff"><rect x="1.7" y="6" width="1.4" height="1.4"/><rect x="4.3" y="6" width="1.4" height="1.4"/><rect x="6.9" y="6" width="1.4" height="1.4"/><rect x="1.7" y="8.7" width="1.4" height="1.4"/><rect x="4.3" y="8.7" width="1.4" height="1.4"/><rect x="6.9" y="8.7" width="1.4" height="1.4"/></g></svg></div>
<div class="a" style="left:386.2px;top:448.75px;width:15px;height:8px"><svg width="15" height="8" viewBox="0 0 15 8"><rect x="0" y="0" width="1.6" height="8" fill="#555"/><circle cx="3.9" cy="2.3" r="1.7" fill="#555"/><path d="M6.3 1.1H12.4Q14.5 1.1 14.5 3.2V8H13V6.7H1.6V5.6H6.3Z" fill="#555"/></svg></div>
<div class="a" style="left:409px;top:431.25px;width:85px;height:42.55px;background:#fff;border-left:1px solid #dadada"></div>
<div class="t" style="left:451.01px;top:435.00px;font-size:10px;color:#222;font-weight:normal;font-style:normal;letter-spacing:0.05px;-webkit-text-stroke:0.15px currentColor;">200,000</div>
<div class="t" style="left:451.01px;top:448.00px;font-size:10px;color:#2a2ad0;font-weight:normal;font-style:normal;letter-spacing:0.05px;-webkit-text-stroke:0.15px currentColor;">220,000</div>
<div class="t" style="left:475.91px;top:460.00px;font-size:10px;color:#222;font-weight:normal;font-style:normal;letter-spacing:0.05px;-webkit-text-stroke:0.15px currentColor;">(0)</div>
<div class="a" style="left:494px;top:431.25px;width:84px;height:42.55px;background:#fff;border-left:1px solid #dadada"></div>
<div class="t" style="left:535.41px;top:435.00px;font-size:10px;color:#222;font-weight:normal;font-style:normal;letter-spacing:0.05px;-webkit-text-stroke:0.15px currentColor;">200,000</div>
<div class="t" style="left:535.41px;top:448.00px;font-size:10px;color:#2a2ad0;font-weight:normal;font-style:normal;letter-spacing:0.05px;-webkit-text-stroke:0.15px currentColor;">280,000</div>
<div class="t" style="left:560.31px;top:460.00px;font-size:10px;color:#222;font-weight:normal;font-style:normal;letter-spacing:0.05px;-webkit-text-stroke:0.15px currentColor;">(0)</div>
<div class="a" style="left:578px;top:431.25px;width:85px;height:42.55px;background:#fff;border-left:1px solid #dadada"></div>
<div class="t" style="left:619.81px;top:435.00px;font-size:10px;color:#222;font-weight:normal;font-style:normal;letter-spacing:0.05px;-webkit-text-stroke:0.15px currentColor;">280,000</div>
<div class="t" style="left:619.81px;top:448.00px;font-size:10px;color:#2a2ad0;font-weight:normal;font-style:normal;letter-spacing:0.05px;-webkit-text-stroke:0.15px currentColor;">378,000</div>
<div class="t" style="left:644.71px;top:460.00px;font-size:10px;color:#222;font-weight:normal;font-style:normal;letter-spacing:0.05px;-webkit-text-stroke:0.15px currentColor;">(0)</div>
<div class="a" style="left:663px;top:431.25px;width:84px;height:42.55px;background:#fff;border-left:1px solid #dadada"></div>
<div class="t" style="left:704.21px;top:435.00px;font-size:10px;color:#222;font-weight:normal;font-style:normal;letter-spacing:0.05px;-webkit-text-stroke:0.15px currentColor;">310,000</div>
<div class="t" style="left:704.21px;top:448.00px;font-size:10px;color:#2a2ad0;font-weight:normal;font-style:normal;letter-spacing:0.05px;-webkit-text-stroke:0.15px currentColor;">372,000</div>
<div class="t" style="left:729.11px;top:460.00px;font-size:10px;color:#222;font-weight:normal;font-style:normal;letter-spacing:0.05px;-webkit-text-stroke:0.15px currentColor;">(0)</div>
<div class="a" style="left:747px;top:431.25px;width:84px;height:42.55px;background:#fff;border-left:1px solid #dadada"></div>
<div class="t" style="left:788.61px;top:435.00px;font-size:10px;color:#222;font-weight:normal;font-style:normal;letter-spacing:0.05px;-webkit-text-stroke:0.15px currentColor;">200,000</div>
<div class="t" style="left:788.61px;top:448.00px;font-size:10px;color:#2a2ad0;font-weight:normal;font-style:normal;letter-spacing:0.05px;-webkit-text-stroke:0.15px currentColor;">320,000</div>
<div class="t" style="left:813.51px;top:460.00px;font-size:10px;color:#222;font-weight:normal;font-style:normal;letter-spacing:0.05px;-webkit-text-stroke:0.15px currentColor;">(0)</div>
<div class="a" style="left:831px;top:431.25px;width:85px;height:42.55px;background:#fff;border-left:1px solid #dadada"></div>
<div class="t" style="left:873.01px;top:435.00px;font-size:10px;color:#222;font-weight:normal;font-style:normal;letter-spacing:0.05px;-webkit-text-stroke:0.15px currentColor;">200,000</div>
<div class="t" style="left:873.01px;top:448.00px;font-size:10px;color:#2a2ad0;font-weight:normal;font-style:normal;letter-spacing:0.05px;-webkit-text-stroke:0.15px currentColor;">300,000</div>
<div class="t" style="left:897.91px;top:460.00px;font-size:10px;color:#222;font-weight:normal;font-style:normal;letter-spacing:0.05px;-webkit-text-stroke:0.15px currentColor;">(0)</div>
<div class="a" style="left:916px;top:431.25px;width:84px;height:42.55px;background:#fff;border-left:1px solid #dadada"></div>
<div class="t" style="left:957.41px;top:435.00px;font-size:10px;color:#222;font-weight:normal;font-style:normal;letter-spacing:0.05px;-webkit-text-stroke:0.15px currentColor;">200,000</div>
<div class="t" style="left:957.41px;top:448.00px;font-size:10px;color:#2a2ad0;font-weight:normal;font-style:normal;letter-spacing:0.05px;-webkit-text-stroke:0.15px currentColor;">270,000</div>
<div class="t" style="left:982.31px;top:460.00px;font-size:10px;color:#222;font-weight:normal;font-style:normal;letter-spacing:0.05px;-webkit-text-stroke:0.15px currentColor;">(0)</div>
<div class="a" style="left:1000px;top:431.25px;width:85px;height:42.55px;background:#fff;border-left:1px solid #dadada"></div>
<div class="t" style="left:1041.81px;top:435.00px;font-size:10px;color:#222;font-weight:normal;font-style:normal;letter-spacing:0.05px;-webkit-text-stroke:0.15px currentColor;">200,000</div>
<div class="t" style="left:1041.81px;top:448.00px;font-size:10px;color:#2a2ad0;font-weight:normal;font-style:normal;letter-spacing:0.05px;-webkit-text-stroke:0.15px currentColor;">180,000</div>
<div class="t" style="left:1066.71px;top:460.00px;font-size:10px;color:#222;font-weight:normal;font-style:normal;letter-spacing:0.05px;-webkit-text-stroke:0.15px currentColor;">(0)</div>
<div class="a" style="left:1085px;top:431.25px;width:84px;height:42.55px;background:#fff;border-left:1px solid #dadada"></div>
<div class="t" style="left:1126.21px;top:435.00px;font-size:10px;color:#222;font-weight:normal;font-style:normal;letter-spacing:0.05px;-webkit-text-stroke:0.15px currentColor;">200,000</div>
<div class="t" style="left:1126.21px;top:448.00px;font-size:10px;color:#2a2ad0;font-weight:normal;font-style:normal;letter-spacing:0.05px;-webkit-text-stroke:0.15px currentColor;">150,000</div>
<div class="t" style="left:1151.11px;top:460.00px;font-size:10px;color:#222;font-weight:normal;font-style:normal;letter-spacing:0.05px;-webkit-text-stroke:0.15px currentColor;">(0)</div>
<div class="a" style="left:1169px;top:431.25px;width:84px;height:42.55px;background:#fff;border-left:1px solid #dadada"></div>
<div class="t" style="left:1210.61px;top:435.00px;font-size:10px;color:#222;font-weight:normal;font-style:normal;letter-spacing:0.05px;-webkit-text-stroke:0.15px currentColor;">280,000</div>
<div class="t" style="left:1211.36px;top:448.00px;font-size:10px;color:#2a2ad0;font-weight:normal;font-style:normal;letter-spacing:0.05px;-webkit-text-stroke:0.15px currentColor;">112,000</div>
<div class="t" style="left:1235.51px;top:460.00px;font-size:10px;color:#222;font-weight:normal;font-style:normal;letter-spacing:0.05px;-webkit-text-stroke:0.15px currentColor;">(0)</div>
<div class="a" style="left:1253px;top:431.25px;width:85px;height:42.55px;background:#fff;border-left:1px solid #dadada"></div>
<div class="t" style="left:1295.01px;top:435.00px;font-size:10px;color:#222;font-weight:normal;font-style:normal;letter-spacing:0.05px;-webkit-text-stroke:0.15px currentColor;">310,000</div>
<div class="t" style="left:1295.76px;top:448.00px;font-size:10px;color:#2a2ad0;font-weight:normal;font-style:normal;letter-spacing:0.05px;-webkit-text-stroke:0.15px currentColor;">110,000</div>
<div class="t" style="left:1319.91px;top:460.00px;font-size:10px;color:#222;font-weight:normal;font-style:normal;letter-spacing:0.05px;-webkit-text-stroke:0.15px currentColor;">(0)</div>
<div class="a" style="left:1338px;top:431.25px;width:84px;height:42.55px;background:#fff;border-left:1px solid #dadada"></div>
<div class="t" style="left:1379.41px;top:435.00px;font-size:10px;color:#222;font-weight:normal;font-style:normal;letter-spacing:0.05px;-webkit-text-stroke:0.15px currentColor;">310,000</div>
<div class="t" style="left:1385.03px;top:448.00px;font-size:10px;color:#2a2ad0;font-weight:normal;font-style:normal;letter-spacing:0.05px;-webkit-text-stroke:0.15px currentColor;">80,000</div>
<div class="t" style="left:1404.31px;top:460.00px;font-size:10px;color:#222;font-weight:normal;font-style:normal;letter-spacing:0.05px;-webkit-text-stroke:0.15px currentColor;">(0)</div>
<div class="a" style="left:1422px;top:431.25px;width:85px;height:42.55px;background:#fff;border-left:1px solid #dadada"></div>
<div class="t" style="left:1463.81px;top:435.00px;font-size:10px;color:#222;font-weight:normal;font-style:normal;letter-spacing:0.05px;-webkit-text-stroke:0.15px currentColor;">200,000</div>
<div class="t" style="left:1469.43px;top:448.00px;font-size:10px;color:#2a2ad0;font-weight:normal;font-style:normal;letter-spacing:0.05px;-webkit-text-stroke:0.15px currentColor;">70,000</div>
<div class="t" style="left:1488.71px;top:460.00px;font-size:10px;color:#222;font-weight:normal;font-style:normal;letter-spacing:0.05px;-webkit-text-stroke:0.15px currentColor;">(0)</div>
<div class="a" style="left:1507px;top:431.25px;width:84px;height:42.55px;background:#fff;border-left:1px solid #dadada"></div>
<div class="t" style="left:1548.21px;top:435.00px;font-size:10px;color:#222;font-weight:normal;font-style:normal;letter-spacing:0.05px;-webkit-text-stroke:0.15px currentColor;">200,000</div>
<div class="t" style="left:1548.21px;top:448.00px;font-size:10px;color:#2a2ad0;font-weight:normal;font-style:normal;letter-spacing:0.05px;-webkit-text-stroke:0.15px currentColor;">120,000</div>
<div class="t" style="left:1573.11px;top:460.00px;font-size:10px;color:#222;font-weight:normal;font-style:normal;letter-spacing:0.05px;-webkit-text-stroke:0.15px currentColor;">(0)</div>
<div class="a" style="left:1591px;top:431.25px;width:84px;height:42.55px;background:#fff;border-left:1px solid #dadada"></div>
<div class="t" style="left:1632.61px;top:435.00px;font-size:10px;color:#222;font-weight:normal;font-style:normal;letter-spacing:0.05px;-webkit-text-stroke:0.15px currentColor;">200,000</div>
<div class="t" style="left:1632.61px;top:448.00px;font-size:10px;color:#2a2ad0;font-weight:normal;font-style:normal;letter-spacing:0.05px;-webkit-text-stroke:0.15px currentColor;">120,000</div>
<div class="t" style="left:1657.51px;top:460.00px;font-size:10px;color:#222;font-weight:normal;font-style:normal;letter-spacing:0.05px;-webkit-text-stroke:0.15px currentColor;">(0)</div>
<div class="a" style="left:35px;top:473.5px;width:374px;height:42.55px;background:#f1f1f1"></div>
<div class="a" style="left:61px;top:488.5px;width:13px;height:13px"><svg width="13" height="13" viewBox="0 0 13 13"><rect width="13" height="13" rx="2" fill="#ff6a2b"/><rect x="2.4" y="5.5" width="8.4" height="2.1" fill="#fff"/></svg></div>
<div class="t" style="left:78.61px;top:490.00px;font-size:11px;color:#111;font-weight:normal;font-style:normal;transform:scaleX(1.0409);">Standard Double (Non Smoking)</div>
<div class="a" style="left:249px;top:484px;width:21px;height:22px;background:#fff;border:1px solid #e3e3e3;border-radius:3px"></div>
<div class="a" style="left:254.2px;top:489.5px;width:10px;height:11.5px"><svg width="10" height="11.5" viewBox="0 0 10 11.5"><rect x="2.1" y="0" width="1.6" height="3" fill="#666"/><rect x="6.3" y="0" width="1.6" height="3" fill="#666"/><rect x="0" y="2.1" width="10" height="9.2" rx="0.8" fill="#666"/><rect x="0" y="4.3" width="10" height="0.5" fill="#888"/><g fill="#fff"><rect x="1.7" y="6" width="1.4" height="1.4"/><rect x="4.3" y="6" width="1.4" height="1.4"/><rect x="6.9" y="6" width="1.4" height="1.4"/><rect x="1.7" y="8.7" width="1.4" height="1.4"/><rect x="4.3" y="8.7" width="1.4" height="1.4"/><rect x="6.9" y="8.7" width="1.4" height="1.4"/></g></svg></div>
<div class="a" style="left:409px;top:473.5px;width:85px;height:42.55px;background:#b2f09f;border-left:1px solid #dadada"></div>
<div class="a" style="left:416.5px;top:484.0px;width:29px;height:22px;background:#fff;border-radius:2.5px;box-shadow:0 0 0 0.5px #d9d4d9"></div>
<div class="t" style="left:450.21px;top:487.00px;font-size:11.5px;color:#111;font-weight:normal;font-style:normal;">0</div>
<div class="a" style="left:460px;top:483.5px;width:7px;height:21px"><svg width="7" height="21" viewBox="0 0 7 21"><line x1="5.6" y1="0.5" x2="0.4" y2="20" stroke="#8a8a8a" stroke-width="0.9"/></svg></div>
<div class="t" style="left:466.11px;top:493.00px;font-size:11.5px;color:#111;font-weight:normal;font-style:normal;">10</div>
<div class="a" style="left:494px;top:473.5px;width:84px;height:42.55px;background:#b2f09f;border-left:1px solid #dadada"></div>
<div class="a" style="left:501.5px;top:484.0px;width:29px;height:22px;background:#fff;border-radius:2.5px;box-shadow:0 0 0 0.5px #d9d4d9"></div>
<div class="t" style="left:535.21px;top:487.00px;font-size:11.5px;color:#111;font-weight:normal;font-style:normal;">0</div>
<div class="a" style="left:545px;top:483.5px;width:7px;height:21px"><svg width="7" height="21" viewBox="0 0 7 21"><line x1="5.6" y1="0.5" x2="0.4" y2="20" stroke="#8a8a8a" stroke-width="0.9"/></svg></div>
<div class="t" style="left:551.11px;top:493.00px;font-size:11.5px;color:#111;font-weight:normal;font-style:normal;">10</div>
<div class="a" style="left:578px;top:473.5px;width:85px;height:42.55px;background:#b2f09f;border-left:1px solid #dadada"></div>
<div class="a" style="left:585.5px;top:484.0px;width:29px;height:22px;background:#fff;border-radius:2.5px;box-shadow:0 0 0 0.5px #d9d4d9"></div>
<div class="t" style="left:619.21px;top:487.00px;font-size:11.5px;color:#111;font-weight:normal;font-style:normal;">0</div>
<div class="a" style="left:629px;top:483.5px;width:7px;height:21px"><svg width="7" height="21" viewBox="0 0 7 21"><line x1="5.6" y1="0.5" x2="0.4" y2="20" stroke="#8a8a8a" stroke-width="0.9"/></svg></div>
<div class="t" style="left:635.11px;top:493.00px;font-size:11.5px;color:#111;font-weight:normal;font-style:normal;">10</div>
<div class="a" style="left:663px;top:473.5px;width:84px;height:42.55px;background:#b2f09f;border-left:1px solid #dadada"></div>
<div class="a" style="left:670.5px;top:484.0px;width:29px;height:22px;background:#fff;border-radius:2.5px;box-shadow:0 0 0 0.5px #d9d4d9"></div>
<div class="t" style="left:704.21px;top:487.00px;font-size:11.5px;color:#111;font-weight:normal;font-style:normal;">0</div>
<div class="a" style="left:714px;top:483.5px;width:7px;height:21px"><svg width="7" height="21" viewBox="0 0 7 21"><line x1="5.6" y1="0.5" x2="0.4" y2="20" stroke="#8a8a8a" stroke-width="0.9"/></svg></div>
<div class="t" style="left:720.11px;top:493.00px;font-size:11.5px;color:#111;font-weight:normal;font-style:normal;">10</div>
<div class="a" style="left:747px;top:473.5px;width:84px;height:42.55px;background:#b2f09f;border-left:1px solid #dadada"></div>
<div class="a" style="left:754.5px;top:484.0px;width:29px;height:22px;background:#fff;border-radius:2.5px;box-shadow:0 0 0 0.5px #d9d4d9"></div>
<div class="t" style="left:788.21px;top:487.00px;font-size:11.5px;color:#111;font-weight:normal;font-style:normal;">0</div>
<div class="a" style="left:798px;top:483.5px;width:7px;height:21px"><svg width="7" height="21" viewBox="0 0 7 21"><line x1="5.6" y1="0.5" x2="0.4" y2="20" stroke="#8a8a8a" stroke-width="0.9"/></svg></div>
<div class="t" style="left:804.11px;top:493.00px;font-size:11.5px;color:#111;font-weight:normal;font-style:normal;">10</div>
<div class="a" style="left:831px;top:473.5px;width:85px;height:42.55px;background:#b2f09f;border-left:1px solid #dadada"></div>
<div class="a" style="left:838.5px;top:484.0px;width:29px;height:22px;background:#fff;border-radius:2.5px;box-shadow:0 0 0 0.5px #d9d4d9"></div>
<div class="t" style="left:872.21px;top:487.00px;font-size:11.5px;color:#111;font-weight:normal;font-style:normal;">0</div>
<div class="a" style="left:882px;top:483.5px;width:7px;height:21px"><svg width="7" height="21" viewBox="0 0 7 21"><line x1="5.6" y1="0.5" x2="0.4" y2="20" stroke="#8a8a8a" stroke-width="0.9"/></svg></div>
<div class="t" style="left:888.11px;top:493.00px;font-size:11.5px;color:#111;font-weight:normal;font-style:normal;">10</div>
<div class="a" style="left:916px;top:473.5px;width:84px;height:42.55px;background:#b2f09f;border-left:1px solid #dadada"></div>
<div class="a" style="left:923.5px;top:484.0px;width:29px;height:22px;background:#fff;border-radius:2.5px;box-shadow:0 0 0 0.5px #d9d4d9"></div>
<div class="t" style="left:957.21px;top:487.00px;font-size:11.5px;color:#111;font-weight:normal;font-style:normal;">0</div>
<div class="a" style="left:967px;top:483.5px;width:7px;height:21px"><svg width="7" height="21" viewBox="0 0 7 21"><line x1="5.6" y1="0.5" x2="0.4" y2="20" stroke="#8a8a8a" stroke-width="0.9"/></svg></div>
<div class="t" style="left:973.11px;top:493.00px;font-size:11.5px;color:#111;font-weight:normal;font-style:normal;">10</div>
<div class="a" style="left:1000px;top:473.5px;width:85px;height:42.55px;background:#b2f09f;border-left:1px solid #dadada"></div>
<div class="a" style="left:1007.5px;top:484.0px;width:29px;height:22px;background:#fff;border-radius:2.5px;box-shadow:0 0 0 0.5px #d9d4d9"></div>
<div class="t" style="left:1041.21px;top:487.00px;font-size:11.5px;color:#111;font-weight:normal;font-style:normal;">0</div>
<div class="a" style="left:1051px;top:483.5px;width:7px;height:21px"><svg width="7" height="21" viewBox="0 0 7 21"><line x1="5.6" y1="0.5" x2="0.4" y2="20" stroke="#8a8a8a" stroke-width="0.9"/></svg></div>
<div class="t" style="left:1057.11px;top:493.00px;font-size:11.5px;color:#111;font-weight:normal;font-style:normal;">10</div>
<div class="a" style="left:1085px;top:473.5px;width:84px;height:42.55px;background:#b2f09f;border-left:1px solid #dadada"></div>
<div class="a" style="left:1092.5px;top:484.0px;width:29px;height:22px;background:#fff;border-radius:2.5px;box-shadow:0 0 0 0.5px #d9d4d9"></div>
<div class="t" style="left:1126.21px;top:487.00px;font-size:11.5px;color:#111;font-weight:normal;font-style:normal;">0</div>
<div class="a" style="left:1136px;top:483.5px;width:7px;height:21px"><svg width="7" height="21" viewBox="0 0 7 21"><line x1="5.6" y1="0.5" x2="0.4" y2="20" stroke="#8a8a8a" stroke-width="0.9"/></svg></div>
<div class="t" style="left:1142.11px;top:493.00px;font-size:11.5px;color:#111;font-weight:normal;font-style:normal;">10</div>
<div class="a" style="left:1169px;top:473.5px;width:84px;height:42.55px;background:#b2f09f;border-left:1px solid #dadada"></div>
<div class="a" style="left:1176.5px;top:484.0px;width:29px;height:22px;background:#fff;border-radius:2.5px;box-shadow:0 0 0 0.5px #d9d4d9"></div>
<div class="t" style="left:1210.21px;top:487.00px;font-size:11.5px;color:#111;font-weight:normal;font-style:normal;">0</div>
<div class="a" style="left:1220px;top:483.5px;width:7px;height:21px"><svg width="7" height="21" viewBox="0 0 7 21"><line x1="5.6" y1="0.5" x2="0.4" y2="20" stroke="#8a8a8a" stroke-width="0.9"/></svg></div>
<div class="t" style="left:1226.11px;top:493.00px;font-size:11.5px;color:#111;font-weight:normal;font-style:normal;">10</div>
<div class="a" style="left:1253px;top:473.5px;width:85px;height:42.55px;background:#b2f09f;border-left:1px solid #dadada"></div>
<div class="a" style="left:1260.5px;top:484.0px;width:29px;height:22px;background:#fff;border-radius:2.5px;box-shadow:0 0 0 0.5px #d9d4d9"></div>
<div class="t" style="left:1294.21px;top:487.00px;font-size:11.5px;color:#111;font-weight:normal;font-style:normal;">0</div>
<div class="a" style="left:1304px;top:483.5px;width:7px;height:21px"><svg width="7" height="21" viewBox="0 0 7 21"><line x1="5.6" y1="0.5" x2="0.4" y2="20" stroke="#8a8a8a" stroke-width="0.9"/></svg></div>
<div class="t" style="left:1310.11px;top:493.00px;font-size:11.5px;color:#111;font-weight:normal;font-style:normal;">10</div>
<div class="a" style="left:1338px;top:473.5px;width:84px;height:42.55px;background:#b2f09f;border-left:1px solid #dadada"></div>
<div class="a" style="left:1345.5px;top:484.0px;width:29px;height:22px;background:#fff;border-radius:2.5px;box-shadow:0 0 0 0.5px #d9d4d9"></div>
<div class="t" style="left:1379.21px;top:487.00px;font-size:11.5px;color:#111;font-weight:normal;font-style:normal;">0</div>
<div class="a" style="left:1389px;top:483.5px;width:7px;height:21px"><svg width="7" height="21" viewBox="0 0 7 21"><line x1="5.6" y1="0.5" x2="0.4" y2="20" stroke="#8a8a8a" stroke-width="0.9"/></svg></div>
<div class="t" style="left:1395.11px;top:493.00px;font-size:11.5px;color:#111;font-weight:normal;font-style:normal;">10</div>
<div class="a" style="left:1422px;top:473.5px;width:85px;height:42.55px;background:#b2f09f;border-left:1px solid #dadada"></div>
<div class="a" style="left:1429.5px;top:484.0px;width:29px;height:22px;background:#fff;border-radius:2.5px;box-shadow:0 0 0 0.5px #d9d4d9"></div>
<div class="t" style="left:1463.21px;top:487.00px;font-size:11.5px;color:#111;font-weight:normal;font-style:normal;">0</div>
<div class="a" style="left:1473px;top:483.5px;width:7px;height:21px"><svg width="7" height="21" viewBox="0 0 7 21"><line x1="5.6" y1="0.5" x2="0.4" y2="20" stroke="#8a8a8a" stroke-width="0.9"/></svg></div>
<div class="t" style="left:1479.11px;top:493.00px;font-size:11.5px;color:#111;font-weight:normal;font-style:normal;">10</div>
<div class="a" style="left:1507px;top:473.5px;width:84px;height:42.55px;background:#b2f09f;border-left:1px solid #dadada"></div>
<div class="a" style="left:1514.5px;top:484.0px;width:29px;height:22px;background:#fff;border-radius:2.5px;box-shadow:0 0 0 0.5px #d9d4d9"></div>
<div class="t" style="left:1548.21px;top:487.00px;font-size:11.5px;color:#111;font-weight:normal;font-style:normal;">3</div>
<div class="a" style="left:1558px;top:483.5px;width:7px;height:21px"><svg width="7" height="21" viewBox="0 0 7 21"><line x1="5.6" y1="0.5" x2="0.4" y2="20" stroke="#8a8a8a" stroke-width="0.9"/></svg></div>
<div class="t" style="left:1564.11px;top:493.00px;font-size:11.5px;color:#111;font-weight:normal;font-style:normal;">10</div>
<div class="a" style="left:1591px;top:473.5px;width:84px;height:42.55px;background:#b2f09f;border-left:1px solid #dadada"></div>
<div class="a" style="left:1598.5px;top:484.0px;width:29px;height:22px;background:#fff;border-radius:2.5px;box-shadow:0 0 0 0.5px #d9d4d9"></div>
<div class="t" style="left:1632.21px;top:487.00px;font-size:11.5px;color:#111;font-weight:normal;font-style:normal;">0</div>
<div class="a" style="left:1642px;top:483.5px;width:7px;height:21px"><svg width="7" height="21" viewBox="0 0 7 21"><line x1="5.6" y1="0.5" x2="0.4" y2="20" stroke="#8a8a8a" stroke-width="0.9"/></svg></div>
<div class="t" style="left:1648.11px;top:493.00px;font-size:11.5px;color:#111;font-weight:normal;font-style:normal;">10</div>
<div class="a" style="left:35px;top:515.75px;width:374px;height:42.55px;background:#fff"></div>
<div class="t" style="left:95.62px;top:532.00px;font-size:11px;color:#111;font-weight:normal;font-style:normal;transform:scaleX(1.0337);">No Meal</div>
<div class="a" style="left:143px;top:526px;width:21px;height:22px;background:#fff;border:1px solid #e3e3e3;border-radius:3px"></div>
<div class="a" style="left:148.2px;top:531.4px;width:10px;height:11.5px"><svg width="10" height="11.5" viewBox="0 0 10 11.5"><rect x="2.1" y="0" width="1.6" height="3" fill="#666"/><rect x="6.3" y="0" width="1.6" height="3" fill="#666"/><rect x="0" y="2.1" width="10" height="9.2" rx="0.8" fill="#666"/><rect x="0" y="4.3" width="10" height="0.5" fill="#888"/><g fill="#fff"><rect x="1.7" y="6" width="1.4" height="1.4"/><rect x="4.3" y="6" width="1.4" height="1.4"/><rect x="6.9" y="6" width="1.4" height="1.4"/><rect x="1.7" y="8.7" width="1.4" height="1.4"/><rect x="4.3" y="8.7" width="1.4" height="1.4"/><rect x="6.9" y="8.7" width="1.4" height="1.4"/></g></svg></div>
<div class="a" style="left:386.2px;top:533.25px;width:15px;height:8px"><svg width="15" height="8" viewBox="0 0 15 8"><rect x="0" y="0" width="1.6" height="8" fill="#555"/><circle cx="3.9" cy="2.3" r="1.7" fill="#555"/><path d="M6.3 1.1H12.4Q14.5 1.1 14.5 3.2V8H13V6.7H1.6V5.6H6.3Z" fill="#555"/></svg></div>
<div class="a" style="left:409px;top:515.75px;width:85px;height:42.55px;background:#fff;border-left:1px solid #dadada"></div>
<div class="t" style="left:451.01px;top:520.00px;font-size:10px;color:#222;font-weight:normal;font-style:normal;letter-spacing:0.05px;-webkit-text-stroke:0.15px currentColor;">160,000</div>
<div class="t" style="left:456.63px;top:532.00px;font-size:10px;color:#2a2ad0;font-weight:normal;font-style:normal;letter-spacing:0.05px;-webkit-text-stroke:0.15px currentColor;">80,000</div>
<div class="t" style="left:475.91px;top:545.00px;font-size:10px;color:#222;font-weight:normal;font-style:normal;letter-spacing:0.05px;-webkit-text-stroke:0.15px currentColor;">(0)</div>
<div class="a" style="left:494px;top:515.75px;width:84px;height:42.55px;background:#fff;border-left:1px solid #dadada"></div>
<div class="t" style="left:535.41px;top:520.00px;font-size:10px;color:#222;font-weight:normal;font-style:normal;letter-spacing:0.05px;-webkit-text-stroke:0.15px currentColor;">160,000</div>
<div class="t" style="left:535.41px;top:532.00px;font-size:10px;color:#2a2ad0;font-weight:normal;font-style:normal;letter-spacing:0.05px;-webkit-text-stroke:0.15px currentColor;">104,000</div>
<div class="t" style="left:560.31px;top:545.00px;font-size:10px;color:#222;font-weight:normal;font-style:normal;letter-spacing:0.05px;-webkit-text-stroke:0.15px currentColor;">(0)</div>
<div class="a" style="left:578px;top:515.75px;width:85px;height:42.55px;background:#fff;border-left:1px solid #dadada"></div>
<div class="t" style="left:619.81px;top:520.00px;font-size:10px;color:#222;font-weight:normal;font-style:normal;letter-spacing:0.05px;-webkit-text-stroke:0.15px currentColor;">240,000</div>
<div class="t" style="left:619.81px;top:532.00px;font-size:10px;color:#2a2ad0;font-weight:normal;font-style:normal;letter-spacing:0.05px;-webkit-text-stroke:0.15px currentColor;">144,000</div>
<div class="t" style="left:644.71px;top:545.00px;font-size:10px;color:#222;font-weight:normal;font-style:normal;letter-spacing:0.05px;-webkit-text-stroke:0.15px currentColor;">(0)</div>
<div class="a" style="left:663px;top:515.75px;width:84px;height:42.55px;background:#fff;border-left:1px solid #dadada"></div>
<div class="t" style="left:704.21px;top:520.00px;font-size:10px;color:#222;font-weight:normal;font-style:normal;letter-spacing:0.05px;-webkit-text-stroke:0.15px currentColor;">270,000</div>
<div class="t" style="left:704.21px;top:532.00px;font-size:10px;color:#2a2ad0;font-weight:normal;font-style:normal;letter-spacing:0.05px;-webkit-text-stroke:0.15px currentColor;">135,000</div>
<div class="t" style="left:729.11px;top:545.00px;font-size:10px;color:#222;font-weight:normal;font-style:normal;letter-spacing:0.05px;-webkit-text-stroke:0.15px currentColor;">(0)</div>
<div class="a" style="left:747px;top:515.75px;width:84px;height:42.55px;background:#fff;border-left:1px solid #dadada"></div>
<div class="t" style="left:788.61px;top:520.00px;font-size:10px;color:#222;font-weight:normal;font-style:normal;letter-spacing:0.05px;-webkit-text-stroke:0.15px currentColor;">160,000</div>
<div class="t" style="left:788.61px;top:532.00px;font-size:10px;color:#2a2ad0;font-weight:normal;font-style:normal;letter-spacing:0.05px;-webkit-text-stroke:0.15px currentColor;">184,000</div>
<div class="t" style="left:813.51px;top:545.00px;font-size:10px;color:#222;font-weight:normal;font-style:normal;letter-spacing:0.05px;-webkit-text-stroke:0.15px currentColor;">(0)</div>
<div class="a" style="left:831px;top:515.75px;width:85px;height:42.55px;background:#fff;border-left:1px solid #dadada"></div>
<div class="t" style="left:873.01px;top:520.00px;font-size:10px;color:#222;font-weight:normal;font-style:normal;letter-spacing:0.05px;-webkit-text-stroke:0.15px currentColor;">160,000</div>
<div class="t" style="left:873.01px;top:532.00px;font-size:10px;color:#2a2ad0;font-weight:normal;font-style:normal;letter-spacing:0.05px;-webkit-text-stroke:0.15px currentColor;">176,000</div>
<div class="t" style="left:897.91px;top:545.00px;font-size:10px;color:#222;font-weight:normal;font-style:normal;letter-spacing:0.05px;-webkit-text-stroke:0.15px currentColor;">(0)</div>
<div class="a" style="left:916px;top:515.75px;width:84px;height:42.55px;background:#fff;border-left:1px solid #dadada"></div>
<div class="t" style="left:957.41px;top:520.00px;font-size:10px;color:#222;font-weight:normal;font-style:normal;letter-spacing:0.05px;-webkit-text-stroke:0.15px currentColor;">160,000</div>
<div class="t" style="left:957.41px;top:532.00px;font-size:10px;color:#2a2ad0;font-weight:normal;font-style:normal;letter-spacing:0.05px;-webkit-text-stroke:0.15px currentColor;">210,000</div>
<div class="t" style="left:982.31px;top:545.00px;font-size:10px;color:#222;font-weight:normal;font-style:normal;letter-spacing:0.05px;-webkit-text-stroke:0.15px currentColor;">(0)</div>
<div class="a" style="left:1000px;top:515.75px;width:85px;height:42.55px;background:#fff;border-left:1px solid #dadada"></div>
<div class="t" style="left:1041.81px;top:520.00px;font-size:10px;color:#222;font-weight:normal;font-style:normal;letter-spacing:0.05px;-webkit-text-stroke:0.15px currentColor;">160,000</div>
<div class="t" style="left:1041.81px;top:532.00px;font-size:10px;color:#2a2ad0;font-weight:normal;font-style:normal;letter-spacing:0.05px;-webkit-text-stroke:0.15px currentColor;">165,000</div>
<div class="t" style="left:1066.71px;top:545.00px;font-size:10px;color:#222;font-weight:normal;font-style:normal;letter-spacing:0.05px;-webkit-text-stroke:0.15px currentColor;">(0)</div>
<div class="a" style="left:1085px;top:515.75px;width:84px;height:42.55px;background:#fff;border-left:1px solid #dadada"></div>
<div class="t" style="left:1126.21px;top:520.00px;font-size:10px;color:#222;font-weight:normal;font-style:normal;letter-spacing:0.05px;-webkit-text-stroke:0.15px currentColor;">160,000</div>
<div class="t" style="left:1126.21px;top:532.00px;font-size:10px;color:#2a2ad0;font-weight:normal;font-style:normal;letter-spacing:0.05px;-webkit-text-stroke:0.15px currentColor;">100,000</div>
<div class="t" style="left:1151.11px;top:545.00px;font-size:10px;color:#222;font-weight:normal;font-style:normal;letter-spacing:0.05px;-webkit-text-stroke:0.15px currentColor;">(0)</div>
<div class="a" style="left:1169px;top:515.75px;width:84px;height:42.55px;background:#fff;border-left:1px solid #dadada"></div>
<div class="t" style="left:1210.61px;top:520.00px;font-size:10px;color:#222;font-weight:normal;font-style:normal;letter-spacing:0.05px;-webkit-text-stroke:0.15px currentColor;">240,000</div>
<div class="t" style="left:1216.23px;top:532.00px;font-size:10px;color:#2a2ad0;font-weight:normal;font-style:normal;letter-spacing:0.05px;-webkit-text-stroke:0.15px currentColor;">96,000</div>
<div class="t" style="left:1235.51px;top:545.00px;font-size:10px;color:#222;font-weight:normal;font-style:normal;letter-spacing:0.05px;-webkit-text-stroke:0.15px currentColor;">(0)</div>
<div class="a" style="left:1253px;top:515.75px;width:85px;height:42.55px;background:#fff;border-left:1px solid #dadada"></div>
<div class="t" style="left:1295.01px;top:520.00px;font-size:10px;color:#222;font-weight:normal;font-style:normal;letter-spacing:0.05px;-webkit-text-stroke:0.15px currentColor;">270,000</div>
<div class="t" style="left:1295.01px;top:532.00px;font-size:10px;color:#2a2ad0;font-weight:normal;font-style:normal;letter-spacing:0.05px;-webkit-text-stroke:0.15px currentColor;">100,000</div>
<div class="t" style="left:1319.91px;top:545.00px;font-size:10px;color:#222;font-weight:normal;font-style:normal;letter-spacing:0.05px;-webkit-text-stroke:0.15px currentColor;">(0)</div>
<div class="a" style="left:1338px;top:515.75px;width:84px;height:42.55px;background:#fff;border-left:1px solid #dadada"></div>
<div class="t" style="left:1379.41px;top:520.00px;font-size:10px;color:#222;font-weight:normal;font-style:normal;letter-spacing:0.05px;-webkit-text-stroke:0.15px currentColor;">270,000</div>
<div class="t" style="left:1385.03px;top:532.00px;font-size:10px;color:#2a2ad0;font-weight:normal;font-style:normal;letter-spacing:0.05px;-webkit-text-stroke:0.15px currentColor;">70,000</div>
<div class="t" style="left:1404.31px;top:545.00px;font-size:10px;color:#222;font-weight:normal;font-style:normal;letter-spacing:0.05px;-webkit-text-stroke:0.15px currentColor;">(0)</div>
<div class="a" style="left:1422px;top:515.75px;width:85px;height:42.55px;background:#fff;border-left:1px solid #dadada"></div>
<div class="t" style="left:1463.81px;top:520.00px;font-size:10px;color:#222;font-weight:normal;font-style:normal;letter-spacing:0.05px;-webkit-text-stroke:0.15px currentColor;">160,000</div>
<div class="t" style="left:1469.43px;top:532.00px;font-size:10px;color:#2a2ad0;font-weight:normal;font-style:normal;letter-spacing:0.05px;-webkit-text-stroke:0.15px currentColor;">56,000</div>
<div class="t" style="left:1488.71px;top:545.00px;font-size:10px;color:#222;font-weight:normal;font-style:normal;letter-spacing:0.05px;-webkit-text-stroke:0.15px currentColor;">(0)</div>
<div class="a" style="left:1507px;top:515.75px;width:84px;height:42.55px;background:#fff;border-left:1px solid #dadada"></div>
<div class="t" style="left:1548.21px;top:520.00px;font-size:10px;color:#222;font-weight:normal;font-style:normal;letter-spacing:0.05px;-webkit-text-stroke:0.15px currentColor;">160,000</div>
<div class="t" style="left:1548.96px;top:532.00px;font-size:10px;color:#2a2ad0;font-weight:normal;font-style:normal;letter-spacing:0.05px;-webkit-text-stroke:0.15px currentColor;">112,000</div>
<div class="t" style="left:1573.11px;top:545.00px;font-size:10px;color:#222;font-weight:normal;font-style:normal;letter-spacing:0.05px;-webkit-text-stroke:0.15px currentColor;">(0)</div>
<div class="a" style="left:1591px;top:515.75px;width:84px;height:42.55px;background:#fff;border-left:1px solid #dadada"></div>
<div class="t" style="left:1632.61px;top:520.00px;font-size:10px;color:#222;font-weight:normal;font-style:normal;letter-spacing:0.05px;-webkit-text-stroke:0.15px currentColor;">160,000</div>
<div class="t" style="left:1633.36px;top:532.00px;font-size:10px;color:#2a2ad0;font-weight:normal;font-style:normal;letter-spacing:0.05px;-webkit-text-stroke:0.15px currentColor;">112,000</div>
<div class="t" style="left:1657.51px;top:545.00px;font-size:10px;color:#222;font-weight:normal;font-style:normal;letter-spacing:0.05px;-webkit-text-stroke:0.15px currentColor;">(0)</div>
<div class="a" style="left:35px;top:558.0px;width:374px;height:42.55px;background:#f1f1f1"></div>
<div class="a" style="left:61px;top:573.0px;width:13px;height:13px"><svg width="13" height="13" viewBox="0 0 13 13"><rect width="13" height="13" rx="2" fill="#ff6a2b"/><rect x="2.4" y="5.5" width="8.4" height="2.1" fill="#fff"/></svg></div>
<div class="t" style="left:78.61px;top:575.00px;font-size:11px;color:#111;font-weight:normal;font-style:normal;transform:scaleX(1.0488);">Standard Twin(Non Smoking)</div>
<div class="a" style="left:234px;top:568px;width:21px;height:22px;background:#fff;border:1px solid #e3e3e3;border-radius:3px"></div>
<div class="a" style="left:239.2px;top:573.5px;width:10px;height:11.5px"><svg width="10" height="11.5" viewBox="0 0 10 11.5"><rect x="2.1" y="0" width="1.6" height="3" fill="#666"/><rect x="6.3" y="0" width="1.6" height="3" fill="#666"/><rect x="0" y="2.1" width="10" height="9.2" rx="0.8" fill="#666"/><rect x="0" y="4.3" width="10" height="0.5" fill="#888"/><g fill="#fff"><rect x="1.7" y="6" width="1.4" height="1.4"/><rect x="4.3" y="6" width="1.4" height="1.4"/><rect x="6.9" y="6" width="1.4" height="1.4"/><rect x="1.7" y="8.7" width="1.4" height="1.4"/><rect x="4.3" y="8.7" width="1.4" height="1.4"/><rect x="6.9" y="8.7" width="1.4" height="1.4"/></g></svg></div>
<div class="a" style="left:409px;top:558.0px;width:85px;height:42.55px;background:#b2f09f;border-left:1px solid #dadada"></div>
<div class="a" style="left:416.5px;top:568.5px;width:29px;height:22px;background:#fff;border-radius:2.5px;box-shadow:0 0 0 0.5px #d9d4d9"></div>
<div class="t" style="left:450.21px;top:571.00px;font-size:11.5px;color:#111;font-weight:normal;font-style:normal;">1</div>
<div class="a" style="left:460px;top:568.0px;width:7px;height:21px"><svg width="7" height="21" viewBox="0 0 7 21"><line x1="5.6" y1="0.5" x2="0.4" y2="20" stroke="#8a8a8a" stroke-width="0.9"/></svg></div>
<div class="t" style="left:466.11px;top:577.00px;font-size:11.5px;color:#111;font-weight:normal;font-style:normal;">15</div>
<div class="a" style="left:494px;top:558.0px;width:84px;height:42.55px;background:#b2f09f;border-left:1px solid #dadada"></div>
<div class="a" style="left:501.5px;top:568.5px;width:29px;height:22px;background:#fff;border-radius:2.5px;box-shadow:0 0 0 0.5px #d9d4d9"></div>
<div class="t" style="left:535.21px;top:571.00px;font-size:11.5px;color:#111;font-weight:normal;font-style:normal;">0</div>
<div class="a" style="left:545px;top:568.0px;width:7px;height:21px"><svg width="7" height="21" viewBox="0 0 7 21"><line x1="5.6" y1="0.5" x2="0.4" y2="20" stroke="#8a8a8a" stroke-width="0.9"/></svg></div>
<div class="t" style="left:551.11px;top:577.00px;font-size:11.5px;color:#111;font-weight:normal;font-style:normal;">15</div>
<div class="a" style="left:578px;top:558.0px;width:85px;height:42.55px;background:#b2f09f;border-left:1px solid #dadada"></div>
<div class="a" style="left:585.5px;top:568.5px;width:29px;height:22px;background:#fff;border-radius:2.5px;box-shadow:0 0 0 0.5px #d9d4d9"></div>
<div class="t" style="left:619.21px;top:571.00px;font-size:11.5px;color:#111;font-weight:normal;font-style:normal;">0</div>
<div class="a" style="left:629px;top:568.0px;width:7px;height:21px"><svg width="7" height="21" viewBox="0 0 7 21"><line x1="5.6" y1="0.5" x2="0.4" y2="20" stroke="#8a8a8a" stroke-width="0.9"/></svg></div>
<div class="t" style="left:635.11px;top:577.00px;font-size:11.5px;color:#111;font-weight:normal;font-style:normal;">15</div>
<div class="a" style="left:663px;top:558.0px;width:84px;height:42.55px;background:#b2f09f;border-left:1px solid #dadada"></div>
<div class="a" style="left:670.5px;top:568.5px;width:29px;height:22px;background:#fff;border-radius:2.5px;box-shadow:0 0 0 0.5px #d9d4d9"></div>
<div class="t" style="left:704.21px;top:571.00px;font-size:11.5px;color:#111;font-weight:normal;font-style:normal;">0</div>
<div class="a" style="left:714px;top:568.0px;width:7px;height:21px"><svg width="7" height="21" viewBox="0 0 7 21"><line x1="5.6" y1="0.5" x2="0.4" y2="20" stroke="#8a8a8a" stroke-width="0.9"/></svg></div>
<div class="t" style="left:720.11px;top:577.00px;font-size:11.5px;color:#111;font-weight:normal;font-style:normal;">15</div>
<div class="a" style="left:747px;top:558.0px;width:84px;height:42.55px;background:#b2f09f;border-left:1px solid #dadada"></div>
<div class="a" style="left:754.5px;top:568.5px;width:29px;height:22px;background:#fff;border-radius:2.5px;box-shadow:0 0 0 0.5px #d9d4d9"></div>
<div class="t" style="left:788.21px;top:571.00px;font-size:11.5px;color:#111;font-weight:normal;font-style:normal;">0</div>
<div class="a" style="left:798px;top:568.0px;width:7px;height:21px"><svg width="7" height="21" viewBox="0 0 7 21"><line x1="5.6" y1="0.5" x2="0.4" y2="20" stroke="#8a8a8a" stroke-width="0.9"/></svg></div>
<div class="t" style="left:804.11px;top:577.00px;font-size:11.5px;color:#111;font-weight:normal;font-style:normal;">15</div>
<div class="a" style="left:831px;top:558.0px;width:85px;height:42.55px;background:#b2f09f;border-left:1px solid #dadada"></div>
<div class="a" style="left:838.5px;top:568.5px;width:29px;height:22px;background:#fff;border-radius:2.5px;box-shadow:0 0 0 0.5px #d9d4d9"></div>
<div class="t" style="left:872.21px;top:571.00px;font-size:11.5px;color:#111;font-weight:normal;font-style:normal;">0</div>
<div class="a" style="left:882px;top:568.0px;width:7px;height:21px"><svg width="7" height="21" viewBox="0 0 7 21"><line x1="5.6" y1="0.5" x2="0.4" y2="20" stroke="#8a8a8a" stroke-width="0.9"/></svg></div>
<div class="t" style="left:888.11px;top:577.00px;font-size:11.5px;color:#111;font-weight:normal;font-style:normal;">15</div>
<div class="a" style="left:916px;top:558.0px;width:84px;height:42.55px;background:#b2f09f;border-left:1px solid #dadada"></div>
<div class="a" style="left:923.5px;top:568.5px;width:29px;height:22px;background:#fff;border-radius:2.5px;box-shadow:0 0 0 0.5px #d9d4d9"></div>
<div class="t" style="left:957.21px;top:571.00px;font-size:11.5px;color:#111;font-weight:normal;font-style:normal;">0</div>
<div class="a" style="left:967px;top:568.0px;width:7px;height:21px"><svg width="7" height="21" viewBox="0 0 7 21"><line x1="5.6" y1="0.5" x2="0.4" y2="20" stroke="#8a8a8a" stroke-width="0.9"/></svg></div>
<div class="t" style="left:973.11px;top:577.00px;font-size:11.5px;color:#111;font-weight:normal;font-style:normal;">15</div>
<div class="a" style="left:1000px;top:558.0px;width:85px;height:42.55px;background:#b2f09f;border-left:1px solid #dadada"></div>
<div class="a" style="left:1007.5px;top:568.5px;width:29px;height:22px;background:#fff;border-radius:2.5px;box-shadow:0 0 0 0.5px #d9d4d9"></div>
<div class="t" style="left:1041.21px;top:571.00px;font-size:11.5px;color:#111;font-weight:normal;font-style:normal;">0</div>
<div class="a" style="left:1051px;top:568.0px;width:7px;height:21px"><svg width="7" height="21" viewBox="0 0 7 21"><line x1="5.6" y1="0.5" x2="0.4" y2="20" stroke="#8a8a8a" stroke-width="0.9"/></svg></div>
<div class="t" style="left:1057.11px;top:577.00px;font-size:11.5px;color:#111;font-weight:normal;font-style:normal;">15</div>
<div class="a" style="left:1085px;top:558.0px;width:84px;height:42.55px;background:#b2f09f;border-left:1px solid #dadada"></div>
<div class="a" style="left:1092.5px;top:568.5px;width:29px;height:22px;background:#fff;border-radius:2.5px;box-shadow:0 0 0 0.5px #d9d4d9"></div>
<div class="t" style="left:1126.21px;top:571.00px;font-size:11.5px;color:#111;font-weight:normal;font-style:normal;">0</div>
<div class="a" style="left:1136px;top:568.0px;width:7px;height:21px"><svg width="7" height="21" viewBox="0 0 7 21"><line x1="5.6" y1="0.5" x2="0.4" y2="20" stroke="#8a8a8a" stroke-width="0.9"/></svg></div>
<div class="t" style="left:1142.11px;top:577.00px;font-size:11.5px;color:#111;font-weight:normal;font-style:normal;">15</div>
<div class="a" style="left:1169px;top:558.0px;width:84px;height:42.55px;background:#b2f09f;border-left:1px solid #dadada"></div>
<div class="a" style="left:1176.5px;top:568.5px;width:29px;height:22px;background:#fff;border-radius:2.5px;box-shadow:0 0 0 0.5px #d9d4d9"></div>
<div class="t" style="left:1210.21px;top:571.00px;font-size:11.5px;color:#111;font-weight:normal;font-style:normal;">0</div>
<div class="a" style="left:1220px;top:568.0px;width:7px;height:21px"><svg width="7" height="21" viewBox="0 0 7 21"><line x1="5.6" y1="0.5" x2="0.4" y2="20" stroke="#8a8a8a" stroke-width="0.9"/></svg></div>
<div class="t" style="left:1226.11px;top:577.00px;font-size:11.5px;color:#111;font-weight:normal;font-style:normal;">15</div>
<div class="a" style="left:1253px;top:558.0px;width:85px;height:42.55px;background:#b2f09f;border-left:1px solid #dadada"></div>
<div class="a" style="left:1260.5px;top:568.5px;width:29px;height:22px;background:#fff;border-radius:2.5px;box-shadow:0 0 0 0.5px #d9d4d9"></div>
<div class="t" style="left:1294.21px;top:571.00px;font-size:11.5px;color:#111;font-weight:normal;font-style:normal;">0</div>
<div class="a" style="left:1304px;top:568.0px;width:7px;height:21px"><svg width="7" height="21" viewBox="0 0 7 21"><line x1="5.6" y1="0.5" x2="0.4" y2="20" stroke="#8a8a8a" stroke-width="0.9"/></svg></div>
<div class="t" style="left:1310.11px;top:577.00px;font-size:11.5px;color:#111;font-weight:normal;font-style:normal;">15</div>
<div class="a" style="left:1338px;top:558.0px;width:84px;height:42.55px;background:#b2f09f;border-left:1px solid #dadada"></div>
<div class="a" style="left:1345.5px;top:568.5px;width:29px;height:22px;background:#fff;border-radius:2.5px;box-shadow:0 0 0 0.5px #d9d4d9"></div>
<div class="t" style="left:1379.21px;top:571.00px;font-size:11.5px;color:#111;font-weight:normal;font-style:normal;">0</div>
<div class="a" style="left:1389px;top:568.0px;width:7px;height:21px"><svg width="7" height="21" viewBox="0 0 7 21"><line x1="5.6" y1="0.5" x2="0.4" y2="20" stroke="#8a8a8a" stroke-width="0.9"/></svg></div>
<div class="t" style="left:1395.11px;top:577.00px;font-size:11.5px;color:#111;font-weight:normal;font-style:normal;">15</div>
<div class="a" style="left:1422px;top:558.0px;width:85px;height:42.55px;background:#b2f09f;border-left:1px solid #dadada"></div>
<div class="a" style="left:1429.5px;top:568.5px;width:29px;height:22px;background:#fff;border-radius:2.5px;box-shadow:0 0 0 0.5px #d9d4d9"></div>
<div class="t" style="left:1463.21px;top:571.00px;font-size:11.5px;color:#111;font-weight:normal;font-style:normal;">5</div>
<div class="a" style="left:1473px;top:568.0px;width:7px;height:21px"><svg width="7" height="21" viewBox="0 0 7 21"><line x1="5.6" y1="0.5" x2="0.4" y2="20" stroke="#8a8a8a" stroke-width="0.9"/></svg></div>
<div class="t" style="left:1479.11px;top:577.00px;font-size:11.5px;color:#111;font-weight:normal;font-style:normal;">15</div>
<div class="a" style="left:1507px;top:558.0px;width:84px;height:42.55px;background:#b2f09f;border-left:1px solid #dadada"></div>
<div class="a" style="left:1514.5px;top:568.5px;width:29px;height:22px;background:#fff;border-radius:2.5px;box-shadow:0 0 0 0.5px #d9d4d9"></div>
<div class="t" style="left:1548.21px;top:571.00px;font-size:11.5px;color:#111;font-weight:normal;font-style:normal;">6</div>
<div class="a" style="left:1558px;top:568.0px;width:7px;height:21px"><svg width="7" height="21" viewBox="0 0 7 21"><line x1="5.6" y1="0.5" x2="0.4" y2="20" stroke="#8a8a8a" stroke-width="0.9"/></svg></div>
<div class="t" style="left:1564.11px;top:577.00px;font-size:11.5px;color:#111;font-weight:normal;font-style:normal;">15</div>
<div class="a" style="left:1591px;top:558.0px;width:84px;height:42.55px;background:#b2f09f;border-left:1px solid #dadada"></div>
<div class="a" style="left:1598.5px;top:568.5px;width:29px;height:22px;background:#fff;border-radius:2.5px;box-shadow:0 0 0 0.5px #d9d4d9"></div>
<div class="t" style="left:1632.21px;top:571.00px;font-size:11.5px;color:#111;font-weight:normal;font-style:normal;">0</div>
<div class="a" style="left:1642px;top:568.0px;width:7px;height:21px"><svg width="7" height="21" viewBox="0 0 7 21"><line x1="5.6" y1="0.5" x2="0.4" y2="20" stroke="#8a8a8a" stroke-width="0.9"/></svg></div>
<div class="t" style="left:1648.11px;top:577.00px;font-size:11.5px;color:#111;font-weight:normal;font-style:normal;">15</div>
<div class="a" style="left:35px;top:600.25px;width:374px;height:42.55px;background:#fff"></div>
<div class="t" style="left:95.62px;top:617.00px;font-size:11px;color:#111;font-weight:normal;font-style:normal;transform:scaleX(1.0337);">No Meal</div>
<div class="a" style="left:143px;top:610px;width:21px;height:22px;background:#fff;border:1px solid #e3e3e3;border-radius:3px"></div>
<div class="a" style="left:148.2px;top:615.4px;width:10px;height:11.5px"><svg width="10" height="11.5" viewBox="0 0 10 11.5"><rect x="2.1" y="0" width="1.6" height="3" fill="#666"/><rect x="6.3" y="0" width="1.6" height="3" fill="#666"/><rect x="0" y="2.1" width="10" height="9.2" rx="0.8" fill="#666"/><rect x="0" y="4.3" width="10" height="0.5" fill="#888"/><g fill="#fff"><rect x="1.7" y="6" width="1.4" height="1.4"/><rect x="4.3" y="6" width="1.4" height="1.4"/><rect x="6.9" y="6" width="1.4" height="1.4"/><rect x="1.7" y="8.7" width="1.4" height="1.4"/><rect x="4.3" y="8.7" width="1.4" height="1.4"/><rect x="6.9" y="8.7" width="1.4" height="1.4"/></g></svg></div>
<div class="a" style="left:386.2px;top:617.75px;width:15px;height:8px"><svg width="15" height="8" viewBox="0 0 15 8"><rect x="0" y="0" width="1.6" height="8" fill="#555"/><circle cx="3.9" cy="2.3" r="1.7" fill="#555"/><path d="M6.3 1.1H12.4Q14.5 1.1 14.5 3.2V8H13V6.7H1.6V5.6H6.3Z" fill="#555"/></svg></div>
<div class="a" style="left:409px;top:600.25px;width:85px;height:42.55px;background:#fff;border-left:1px solid #dadada"></div>
<div class="t" style="left:451.01px;top:604.00px;font-size:10px;color:#222;font-weight:normal;font-style:normal;letter-spacing:0.05px;-webkit-text-stroke:0.15px currentColor;">180,000</div>
<div class="t" style="left:456.63px;top:617.00px;font-size:10px;color:#2a2ad0;font-weight:normal;font-style:normal;letter-spacing:0.05px;-webkit-text-stroke:0.15px currentColor;">82,800</div>
<div class="t" style="left:475.91px;top:629.00px;font-size:10px;color:#222;font-weight:normal;font-style:normal;letter-spacing:0.05px;-webkit-text-stroke:0.15px currentColor;">(0)</div>
<div class="a" style="left:494px;top:600.25px;width:84px;height:42.55px;background:#fff;border-left:1px solid #dadada"></div>
<div class="t" style="left:535.41px;top:604.00px;font-size:10px;color:#222;font-weight:normal;font-style:normal;letter-spacing:0.05px;-webkit-text-stroke:0.15px currentColor;">180,000</div>
<div class="t" style="left:541.03px;top:617.00px;font-size:10px;color:#2a2ad0;font-weight:normal;font-style:normal;letter-spacing:0.05px;-webkit-text-stroke:0.15px currentColor;">81,000</div>
<div class="t" style="left:560.31px;top:629.00px;font-size:10px;color:#222;font-weight:normal;font-style:normal;letter-spacing:0.05px;-webkit-text-stroke:0.15px currentColor;">(0)</div>
<div class="a" style="left:578px;top:600.25px;width:85px;height:42.55px;background:#fff;border-left:1px solid #dadada"></div>
<div class="t" style="left:619.81px;top:604.00px;font-size:10px;color:#222;font-weight:normal;font-style:normal;letter-spacing:0.05px;-webkit-text-stroke:0.15px currentColor;">260,000</div>
<div class="t" style="left:619.81px;top:617.00px;font-size:10px;color:#2a2ad0;font-weight:normal;font-style:normal;letter-spacing:0.05px;-webkit-text-stroke:0.15px currentColor;">143,000</div>
<div class="t" style="left:644.71px;top:629.00px;font-size:10px;color:#222;font-weight:normal;font-style:normal;letter-spacing:0.05px;-webkit-text-stroke:0.15px currentColor;">(0)</div>
<div class="a" style="left:663px;top:600.25px;width:84px;height:42.55px;background:#fff;border-left:1px solid #dadada"></div>
<div class="t" style="left:704.21px;top:604.00px;font-size:10px;color:#222;font-weight:normal;font-style:normal;letter-spacing:0.05px;-webkit-text-stroke:0.15px currentColor;">290,000</div>
<div class="t" style="left:704.21px;top:617.00px;font-size:10px;color:#2a2ad0;font-weight:normal;font-style:normal;letter-spacing:0.05px;-webkit-text-stroke:0.15px currentColor;">237,800</div>
<div class="t" style="left:729.11px;top:629.00px;font-size:10px;color:#222;font-weight:normal;font-style:normal;letter-spacing:0.05px;-webkit-text-stroke:0.15px currentColor;">(0)</div>
<div class="a" style="left:747px;top:600.25px;width:84px;height:42.55px;background:#fff;border-left:1px solid #dadada"></div>
<div class="t" style="left:788.61px;top:604.00px;font-size:10px;color:#222;font-weight:normal;font-style:normal;letter-spacing:0.05px;-webkit-text-stroke:0.15px currentColor;">180,000</div>
<div class="t" style="left:788.61px;top:617.00px;font-size:10px;color:#2a2ad0;font-weight:normal;font-style:normal;letter-spacing:0.05px;-webkit-text-stroke:0.15px currentColor;">234,000</div>
<div class="t" style="left:813.51px;top:629.00px;font-size:10px;color:#222;font-weight:normal;font-style:normal;letter-spacing:0.05px;-webkit-text-stroke:0.15px currentColor;">(0)</div>
<div class="a" style="left:831px;top:600.25px;width:85px;height:42.55px;background:#fff;border-left:1px solid #dadada"></div>
<div class="t" style="left:873.01px;top:604.00px;font-size:10px;color:#222;font-weight:normal;font-style:normal;letter-spacing:0.05px;-webkit-text-stroke:0.15px currentColor;">180,000</div>
<div class="t" style="left:873.01px;top:617.00px;font-size:10px;color:#2a2ad0;font-weight:normal;font-style:normal;letter-spacing:0.05px;-webkit-text-stroke:0.15px currentColor;">216,000</div>
<div class="t" style="left:897.91px;top:629.00px;font-size:10px;color:#222;font-weight:normal;font-style:normal;letter-spacing:0.05px;-webkit-text-stroke:0.15px currentColor;">(0)</div>
<div class="a" style="left:916px;top:600.25px;width:84px;height:42.55px;background:#fff;border-left:1px solid #dadada"></div>
<div class="t" style="left:957.41px;top:604.00px;font-size:10px;color:#222;font-weight:normal;font-style:normal;letter-spacing:0.05px;-webkit-text-stroke:0.15px currentColor;">180,000</div>
<div class="t" style="left:957.41px;top:617.00px;font-size:10px;color:#2a2ad0;font-weight:normal;font-style:normal;letter-spacing:0.05px;-webkit-text-stroke:0.15px currentColor;">216,000</div>
<div class="t" style="left:982.31px;top:629.00px;font-size:10px;color:#222;font-weight:normal;font-style:normal;letter-spacing:0.05px;-webkit-text-stroke:0.15px currentColor;">(0)</div>
<div class="a" style="left:1000px;top:600.25px;width:85px;height:42.55px;background:#fff;border-left:1px solid #dadada"></div>
<div class="t" style="left:1041.81px;top:604.00px;font-size:10px;color:#222;font-weight:normal;font-style:normal;letter-spacing:0.05px;-webkit-text-stroke:0.15px currentColor;">180,000</div>
<div class="t" style="left:1041.81px;top:617.00px;font-size:10px;color:#2a2ad0;font-weight:normal;font-style:normal;letter-spacing:0.05px;-webkit-text-stroke:0.15px currentColor;">144,000</div>
<div class="t" style="left:1066.71px;top:629.00px;font-size:10px;color:#222;font-weight:normal;font-style:normal;letter-spacing:0.05px;-webkit-text-stroke:0.15px currentColor;">(0)</div>
<div class="a" style="left:1085px;top:600.25px;width:84px;height:42.55px;background:#fff;border-left:1px solid #dadada"></div>
<div class="t" style="left:1126.21px;top:604.00px;font-size:10px;color:#222;font-weight:normal;font-style:normal;letter-spacing:0.05px;-webkit-text-stroke:0.15px currentColor;">180,000</div>
<div class="t" style="left:1126.21px;top:617.00px;font-size:10px;color:#2a2ad0;font-weight:normal;font-style:normal;letter-spacing:0.05px;-webkit-text-stroke:0.15px currentColor;">102,600</div>
<div class="t" style="left:1151.11px;top:629.00px;font-size:10px;color:#222;font-weight:normal;font-style:normal;letter-spacing:0.05px;-webkit-text-stroke:0.15px currentColor;">(0)</div>
<div class="a" style="left:1169px;top:600.25px;width:84px;height:42.55px;background:#fff;border-left:1px solid #dadada"></div>
<div class="t" style="left:1210.61px;top:604.00px;font-size:10px;color:#222;font-weight:normal;font-style:normal;letter-spacing:0.05px;-webkit-text-stroke:0.15px currentColor;">260,000</div>
<div class="t" style="left:1216.23px;top:617.00px;font-size:10px;color:#2a2ad0;font-weight:normal;font-style:normal;letter-spacing:0.05px;-webkit-text-stroke:0.15px currentColor;">78,000</div>
<div class="t" style="left:1235.51px;top:629.00px;font-size:10px;color:#222;font-weight:normal;font-style:normal;letter-spacing:0.05px;-webkit-text-stroke:0.15px currentColor;">(0)</div>
<div class="a" style="left:1253px;top:600.25px;width:85px;height:42.55px;background:#fff;border-left:1px solid #dadada"></div>
<div class="t" style="left:1295.01px;top:604.00px;font-size:10px;color:#222;font-weight:normal;font-style:normal;letter-spacing:0.05px;-webkit-text-stroke:0.15px currentColor;">290,000</div>
<div class="t" style="left:1300.63px;top:617.00px;font-size:10px;color:#2a2ad0;font-weight:normal;font-style:normal;letter-spacing:0.05px;-webkit-text-stroke:0.15px currentColor;">87,000</div>
<div class="t" style="left:1319.91px;top:629.00px;font-size:10px;color:#222;font-weight:normal;font-style:normal;letter-spacing:0.05px;-webkit-text-stroke:0.15px currentColor;">(0)</div>
<div class="a" style="left:1338px;top:600.25px;width:84px;height:42.55px;background:#fff;border-left:1px solid #dadada"></div>
<div class="t" style="left:1379.41px;top:604.00px;font-size:10px;color:#222;font-weight:normal;font-style:normal;letter-spacing:0.05px;-webkit-text-stroke:0.15px currentColor;">290,000</div>
<div class="t" style="left:1385.03px;top:617.00px;font-size:10px;color:#2a2ad0;font-weight:normal;font-style:normal;letter-spacing:0.05px;-webkit-text-stroke:0.15px currentColor;">75,000</div>
<div class="t" style="left:1404.31px;top:629.00px;font-size:10px;color:#222;font-weight:normal;font-style:normal;letter-spacing:0.05px;-webkit-text-stroke:0.15px currentColor;">(0)</div>
<div class="a" style="left:1422px;top:600.25px;width:85px;height:42.55px;background:#fff;border-left:1px solid #dadada"></div>
<div class="t" style="left:1463.81px;top:604.00px;font-size:10px;color:#222;font-weight:normal;font-style:normal;letter-spacing:0.05px;-webkit-text-stroke:0.15px currentColor;">180,000</div>
<div class="t" style="left:1469.43px;top:617.00px;font-size:10px;color:#2a2ad0;font-weight:normal;font-style:normal;letter-spacing:0.05px;-webkit-text-stroke:0.15px currentColor;">65,000</div>
<div class="t" style="left:1488.71px;top:629.00px;font-size:10px;color:#222;font-weight:normal;font-style:normal;letter-spacing:0.05px;-webkit-text-stroke:0.15px currentColor;">(0)</div>
<div class="a" style="left:1507px;top:600.25px;width:84px;height:42.55px;background:#fff;border-left:1px solid #dadada"></div>
<div class="t" style="left:1548.21px;top:604.00px;font-size:10px;color:#222;font-weight:normal;font-style:normal;letter-spacing:0.05px;-webkit-text-stroke:0.15px currentColor;">180,000</div>
<div class="t" style="left:1548.21px;top:617.00px;font-size:10px;color:#2a2ad0;font-weight:normal;font-style:normal;letter-spacing:0.05px;-webkit-text-stroke:0.15px currentColor;">108,000</div>
<div class="t" style="left:1573.11px;top:629.00px;font-size:10px;color:#222;font-weight:normal;font-style:normal;letter-spacing:0.05px;-webkit-text-stroke:0.15px currentColor;">(0)</div>
<div class="a" style="left:1591px;top:600.25px;width:84px;height:42.55px;background:#fff;border-left:1px solid #dadada"></div>
<div class="t" style="left:1632.61px;top:604.00px;font-size:10px;color:#222;font-weight:normal;font-style:normal;letter-spacing:0.05px;-webkit-text-stroke:0.15px currentColor;">180,000</div>
<div class="t" style="left:1632.61px;top:617.00px;font-size:10px;color:#2a2ad0;font-weight:normal;font-style:normal;letter-spacing:0.05px;-webkit-text-stroke:0.15px currentColor;">108,000</div>
<div class="t" style="left:1657.51px;top:629.00px;font-size:10px;color:#222;font-weight:normal;font-style:normal;letter-spacing:0.05px;-webkit-text-stroke:0.15px currentColor;">(0)</div>
<div class="a" style="left:35px;top:642.5px;width:1539px;height:42.5px;background:#333"></div>
<div class="a" style="left:44px;top:656.5px;width:14px;height:14px"><svg width="14" height="14" viewBox="0 0 14 14"><rect width="14" height="14" rx="2" fill="#fff"/><rect x="2.4" y="5.9" width="8.4" height="1.4" fill="#222"/></svg></div>
<div class="t" style="left:61.92px;top:659.00px;font-size:11px;color:#fff;font-weight:bold;font-style:normal;-webkit-text-stroke:0.1px currentColor;transform:scaleX(1.0350);">Dynamic Rate : 105015</div>
<div class="t" style="left:419.23px;top:660.00px;font-size:10px;color:#f26b2b;font-weight:normal;font-style:normal;transform:scaleX(0.9570);">Contract Status: A</div>
<div class="t" style="left:516.85px;top:660.00px;font-size:10px;color:#f26b2b;font-weight:normal;font-style:normal;transform:scaleX(0.9137);">Curr : KRW</div>
<div class="t" style="left:582.83px;top:660.00px;font-size:10px;color:#f26b2b;font-weight:normal;font-style:normal;transform:scaleX(0.9513);">Gross</div>
<div class="t" style="left:627.44px;top:660.00px;font-size:10px;color:#f26b2b;font-weight:normal;font-style:normal;transform:scaleX(0.9384);">Comm Rate : 15%</div>
<div class="t" style="left:723.85px;top:660.00px;font-size:10px;color:#f26b2b;font-weight:normal;font-style:normal;transform:scaleX(0.9105);">Rate : Sanha</div>
<div class="t" style="left:796.73px;top:660.00px;font-size:10px;color:#f26b2b;font-weight:normal;font-style:normal;transform:scaleX(0.9432);">Allotment : Sanha</div>
<div class="a" style="left:507px;top:657.5px;width:1px;height:12.5px;background:#9a9a9a"></div>
<div class="a" style="left:574px;top:657.5px;width:1px;height:12.5px;background:#9a9a9a"></div>
<div class="a" style="left:618px;top:657.5px;width:1px;height:12.5px;background:#9a9a9a"></div>
<div class="a" style="left:714px;top:657.5px;width:1px;height:12.5px;background:#9a9a9a"></div>
<div class="a" style="left:787px;top:657.5px;width:1px;height:12.5px;background:#9a9a9a"></div>
<div class="a" style="left:35px;top:431px;width:374px;height:1px;background:#e0e0e0"></div>
<div class="a" style="left:35px;top:473px;width:374px;height:1px;background:#e0e0e0"></div>
<div class="a" style="left:35px;top:515px;width:374px;height:1px;background:#e0e0e0"></div>
<div class="a" style="left:35px;top:558px;width:374px;height:1px;background:#e0e0e0"></div>
<div class="a" style="left:35px;top:600px;width:374px;height:1px;background:#e0e0e0"></div>
<div class="a" style="left:35px;top:389px;width:374px;height:2px;background:#333"></div>
<div class="a" style="left:35px;top:390px;width:374px;height:1px;background:#fff"></div>
<div class="a" style="left:403px;top:549px;width:93px;height:58px;border:4px solid #f00;border-radius:2px"></div>
</body></html>
